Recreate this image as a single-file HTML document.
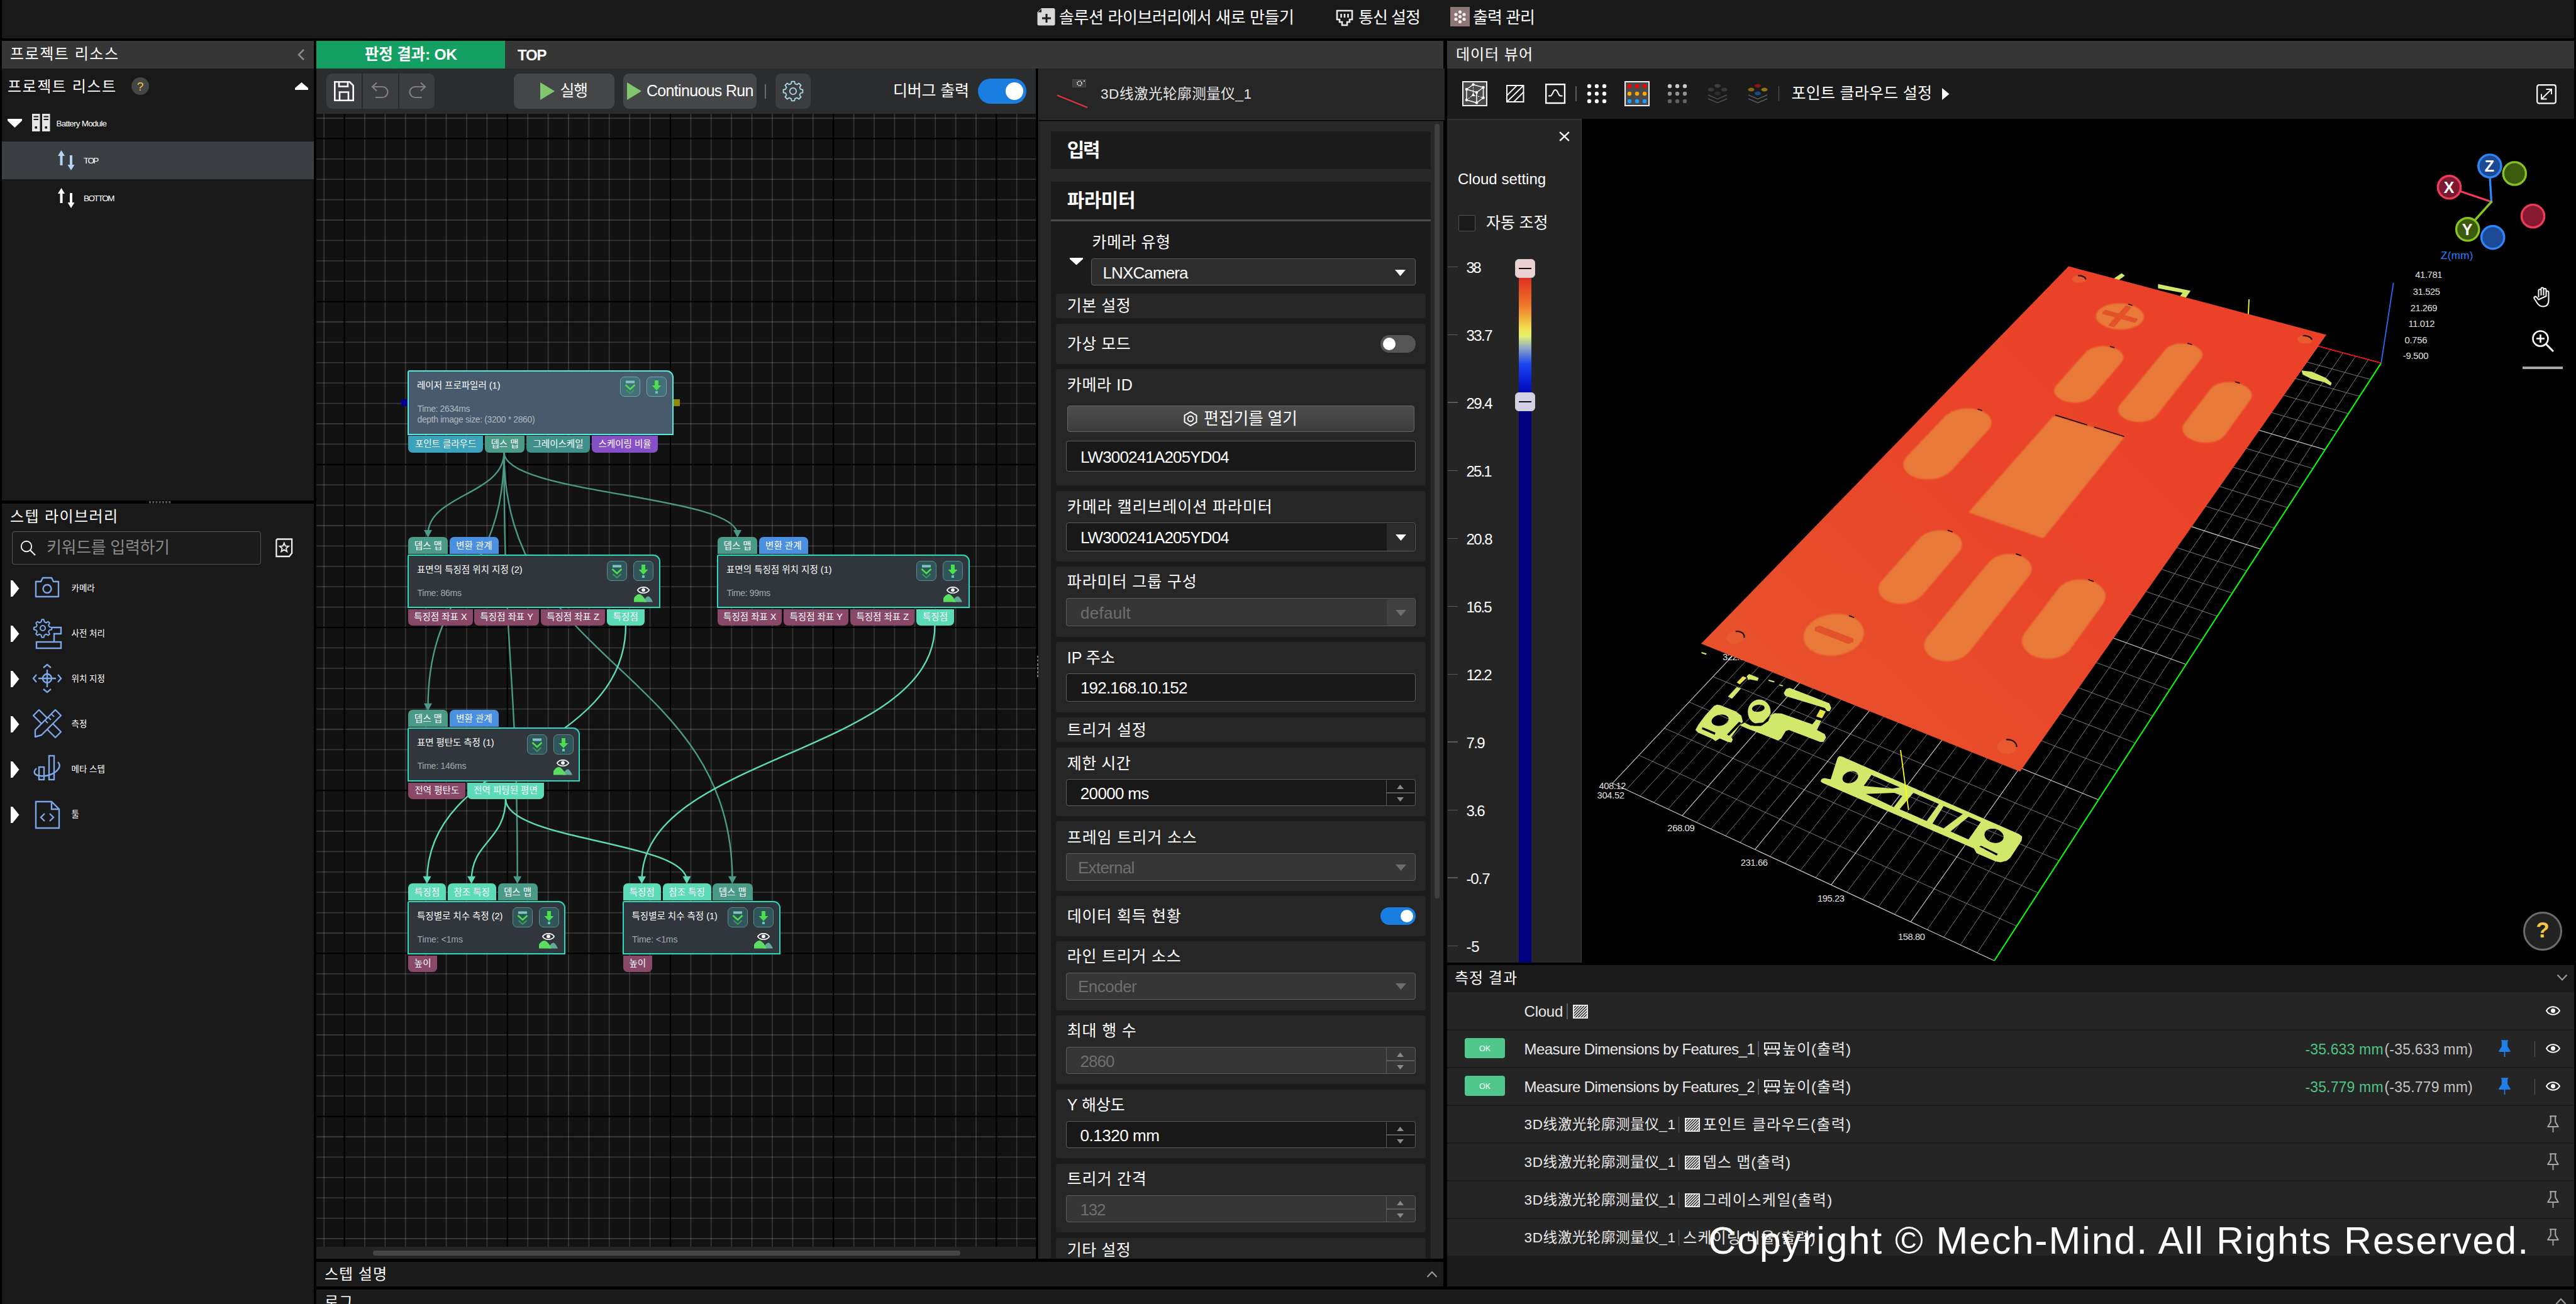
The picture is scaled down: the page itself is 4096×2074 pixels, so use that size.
<!DOCTYPE html>
<html lang="ko"><head><meta charset="utf-8"><title>Mech-MSR</title><style>
*{box-sizing:border-box;margin:0;padding:0}
html,body{width:4096px;height:2074px;overflow:hidden;background:#000}
body{position:relative;font-family:"Liberation Sans","Noto Sans CJK KR","Noto Sans CJK SC",sans-serif;color:#fff}
div{position:absolute}
.t{white-space:nowrap}
svg{overflow:visible}
</style></head><body>
<!-- p1_frame -->
<div style="left:3.0px;top:0.0px;width:4090.0px;height:60.6px;background:#191919;border-radius:0 0 3px 3px;"></div>
<svg style="position:absolute;left:1649.0px;top:12.0px;" width="29.0" height="30.0" viewBox="0 0 29 30"><path d="M8 1 H26 a2.5 2.5 0 0 1 2.5 2.5 V26 a2.5 2.5 0 0 1 -2.5 2.5 H3 a2.5 2.5 0 0 1 -2.5 -2.5 V8.5 Z" fill="#d8d8d8"/><path d="M0.5 8 L7.5 1 V8 Z" fill="#191919" stroke="#d8d8d8" stroke-width="1"/><path d="M15 10 V24 M8 17 H22" stroke="#191919" stroke-width="3" fill="none"/></svg>
<div class="t" style="left:1684.0px;top:9.5px;line-height:36px;font-size:26px;color:#fff;letter-spacing:-0.38px;">솔루션 라이브러리에서 새로 만들기</div>
<svg style="position:absolute;left:2124.0px;top:15.0px;" width="28.0" height="28.0" viewBox="0 0 28 28"><path d="M2 2 H26 V16 H22 V20 H18 V25 H10 V20 H6 V16 H2 Z" fill="none" stroke="#e8e8e8" stroke-width="2.6" stroke-linejoin="miter"/><path d="M8.5 7 V13 M14 7 V13 M19.5 7 V13" stroke="#e8e8e8" stroke-width="2.6"/></svg>
<div class="t" style="left:2160.0px;top:9.5px;line-height:36px;font-size:26px;color:#fff;letter-spacing:-0.98px;">통신 설정</div>
<svg style="position:absolute;left:2306.0px;top:11.0px;" width="31.0" height="31.0" viewBox="0 0 31 31"><rect x="0" y="0" width="31" height="31" fill="#8d7777"/><circle cx="15.5" cy="8" r="2.6" fill="#f4eeee"/><circle cx="9" cy="12" r="2.6" fill="#f4eeee"/><circle cx="22" cy="12" r="2.6" fill="#f4eeee"/><circle cx="15.5" cy="15.5" r="2.6" fill="#f4eeee"/><circle cx="9" cy="19.5" r="2.6" fill="#f4eeee"/><circle cx="22" cy="19.5" r="2.6" fill="#f4eeee"/><circle cx="15.5" cy="23.5" r="2.6" fill="#f4eeee"/></svg>
<div class="t" style="left:2342.0px;top:9.5px;line-height:36px;font-size:26px;color:#fff;letter-spacing:-0.98px;">출력 관리</div>
<div style="left:3.0px;top:65.0px;width:496.0px;height:44.0px;background:#363636;"></div>
<div class="t" style="left:16.0px;top:69.0px;line-height:34px;font-size:24px;color:#fff;letter-spacing:1.54px;">프로젝트 리소스</div>
<svg style="position:absolute;left:472.0px;top:77.0px;" width="14.0" height="20.0" viewBox="0 0 14 20"><path d="M11 2 L3 10 L11 18" fill="none" stroke="#8a8a8a" stroke-width="2.6"/></svg>
<div style="left:3.0px;top:109.0px;width:496.0px;height:687.0px;background:#191919;"></div>
<div class="t" style="left:12.0px;top:120.5px;line-height:34px;font-size:24px;color:#fff;letter-spacing:1.54px;">프로젝트 리스트</div>
<div style="left:209.0px;top:123.0px;width:28.0px;height:28.0px;background:#454545;border-radius:50%;"></div>
<div class="t" style="left:-177.0px;width:800px;text-align:center;top:124.0px;line-height:27px;font-size:19px;color:#f2c744;">?</div>
<svg style="position:absolute;left:469.0px;top:131.0px;" width="21.0" height="12.0" viewBox="0 0 21 12"><path d="M10.5 0 L21 9 V12 H0 V9 Z" fill="#fff"/></svg>
<svg style="position:absolute;left:12.0px;top:189.0px;" width="23.0" height="14.0" viewBox="0 0 23 14"><path d="M0 0 H23 V3 L11.5 14 L0 3 Z" fill="#fff"/></svg>
<svg style="position:absolute;left:50.5px;top:181.0px;" width="28.5" height="28.0" viewBox="0 0 28.5 28"><g fill="#e6e6e6"><rect x="0" y="0" width="12.5" height="28"/><rect x="16" y="0" width="12.5" height="28"/></g><g fill="#191919"><rect x="2.5" y="3.5" width="7.5" height="2"/><rect x="2.5" y="8" width="7.5" height="2"/><rect x="4.5" y="20" width="3.5" height="3.5"/><rect x="18.5" y="3.5" width="7.5" height="2"/><rect x="18.5" y="8" width="7.5" height="2"/><rect x="20.5" y="20" width="3.5" height="3.5"/></g></svg>
<div class="t" style="left:89.5px;top:186.5px;line-height:19px;font-size:13.5px;color:#fff;letter-spacing:-0.79px;">Battery Module</div>
<div style="left:3.0px;top:225.0px;width:496.0px;height:60.0px;background:#3a3d42;"></div>
<svg style="position:absolute;left:92.0px;top:239.0px;" width="27.0" height="32.0" viewBox="0 0 27 32"><g fill="#b7d3f2"><path d="M5.5 0 L11 9 H7.5 V24 H3.5 V9 H0 Z"/><path d="M21 32 L15.5 23 H19 V8 H23 V23 H26.5 Z"/></g></svg>
<div class="t" style="left:133.0px;top:246.0px;line-height:19px;font-size:13.5px;color:#fff;letter-spacing:-1.62px;">TOP</div>
<svg style="position:absolute;left:92.0px;top:299.0px;" width="27.0" height="32.0" viewBox="0 0 27 32"><g fill="#ffffff"><path d="M5.5 0 L11 9 H7.5 V24 H3.5 V9 H0 Z"/><path d="M21 32 L15.5 23 H19 V8 H23 V23 H26.5 Z"/></g></svg>
<div class="t" style="left:133.0px;top:306.0px;line-height:19px;font-size:13.5px;color:#fff;letter-spacing:-1.62px;">BOTTOM</div>
<svg style="position:absolute;left:237.0px;top:797.0px;" width="36.0" height="4.0" viewBox="0 0 36 4"><rect x="0.0" y="0" width="3" height="3.5" fill="#555"/><rect x="5.2" y="0" width="3" height="3.5" fill="#555"/><rect x="10.4" y="0" width="3" height="3.5" fill="#555"/><rect x="15.6" y="0" width="3" height="3.5" fill="#555"/><rect x="20.8" y="0" width="3" height="3.5" fill="#555"/><rect x="26.0" y="0" width="3" height="3.5" fill="#555"/><rect x="31.2" y="0" width="3" height="3.5" fill="#555"/></svg>
<div style="left:3.0px;top:801.0px;width:496.0px;height:1273.0px;background:#191919;"></div>
<div class="t" style="left:16.0px;top:805.0px;line-height:34px;font-size:24px;color:#fff;letter-spacing:1.40px;">스텝 라이브러리</div>
<div style="left:19.0px;top:845.0px;width:396.0px;height:53.0px;background:#1b1b1b;border:1.5px solid #555;border-radius:4px;"></div>
<svg style="position:absolute;left:32.0px;top:859.0px;" width="26.0" height="26.0" viewBox="0 0 26 26"><circle cx="10" cy="10" r="8.2" fill="none" stroke="#f4f4f4" stroke-width="1.9"/><path d="M16 16 L24 24" stroke="#f4f4f4" stroke-width="2.2"/></svg>
<div class="t" style="left:74.0px;top:853.0px;line-height:36px;font-size:26px;color:#8a8a8a;letter-spacing:-0.32px;">키워드를 입력하기</div>
<svg style="position:absolute;left:437.5px;top:856.0px;" width="27.5" height="30.5" viewBox="0 0 29 32"><path d="M3 1.5 H27.5 V25 L23 30.5 H1.5 V3 Z" fill="none" stroke="#f0f0f0" stroke-width="2.4"/><path d="M14.5 8 L16.6 13 L22 13.4 L17.9 16.9 L19.2 22.2 L14.5 19.3 L9.8 22.2 L11.1 16.9 L7 13.4 L12.4 13 Z" fill="none" stroke="#f0f0f0" stroke-width="2"/></svg>
<svg style="position:absolute;left:16.8px;top:923.0px;" width="13.5" height="26.0" viewBox="0 0 13.5 26"><path d="M0 0 H3 L13.5 13 L3 26 H0 Z" fill="#fff"/></svg>
<svg style="position:absolute;left:54.8px;top:913.0px;" width="46.0" height="46.0" viewBox="0 0 46 46"><path d="M2 12 H10 L13 6 H27 L30 12 H38 V36 H2 Z" fill="none" stroke="#7da7e6" stroke-width="2.4" stroke-linejoin="round"/><circle cx="20" cy="23.5" r="6.5" fill="none" stroke="#7da7e6" stroke-width="2.4"/></svg>
<div class="t" style="left:113.5px;top:925.5px;line-height:19px;font-size:13.5px;color:#fff;">카메라</div>
<svg style="position:absolute;left:16.8px;top:995.0px;" width="13.5" height="26.0" viewBox="0 0 13.5 26"><path d="M0 0 H3 L13.5 13 L3 26 H0 Z" fill="#fff"/></svg>
<svg style="position:absolute;left:52.0px;top:984.0px;" width="46.0" height="46.0" viewBox="0 0 46 46"><circle cx="16" cy="15" r="4" fill="none" stroke="#7da7e6" stroke-width="2.2"/><path d="M16 1.5 l3 0 l1 4 l3 1.5 l3.5 -2 l2.5 2.5 l-2 3.5 l1.5 3 l4 1 l0 3.5 l-4 1 l-1.5 3 l2 3.5 l-2.5 2.5 l-3.5 -2 l-3 1.5 l-1 4 l-3.5 0 l-1 -4 l-3 -1.5 l-3.500 2 l-2.5 -2.5 l2 -3.5 l-1.5 -3 l-4 -1 l0 -3.5 l4 -1 l1.5 -3 l-2 -3.5 l2.5 -2.5 l3.5 2 l3 -1.5 l1 -4 z" fill="none" stroke="#7da7e6" stroke-width="2.2" stroke-linejoin="round" transform="translate(0,0) scale(0.93)"/><path d="M31 14 H45 V24 H34 V36" fill="none" stroke="#7da7e6" stroke-width="2.4"/><rect x="6" y="37" width="39" height="10" fill="none" stroke="#7da7e6" stroke-width="2.4"/></svg>
<div class="t" style="left:113.5px;top:997.5px;line-height:19px;font-size:13.5px;color:#fff;">사전 처리</div>
<svg style="position:absolute;left:16.8px;top:1067.0px;" width="13.5" height="26.0" viewBox="0 0 13.5 26"><path d="M0 0 H3 L13.5 13 L3 26 H0 Z" fill="#fff"/></svg>
<svg style="position:absolute;left:52.0px;top:1056.0px;" width="46.0" height="46.0" viewBox="0 0 46 46"><circle cx="23" cy="23" r="7" fill="none" stroke="#7da7e6" stroke-width="2.4"/><path d="M23 9 V37 M9 23 H37" stroke="#7da7e6" stroke-width="2.4"/><path d="M17 6 L23 1 L29 6 M17 40 L23 45 L29 40 M6 17 L1 23 L6 29 M40 17 L45 23 L40 29" fill="none" stroke="#7da7e6" stroke-width="2.4"/></svg>
<div class="t" style="left:113.5px;top:1069.5px;line-height:19px;font-size:13.5px;color:#fff;">위치 지정</div>
<svg style="position:absolute;left:16.8px;top:1139.0px;" width="13.5" height="26.0" viewBox="0 0 13.5 26"><path d="M0 0 H3 L13.5 13 L3 26 H0 Z" fill="#fff"/></svg>
<svg style="position:absolute;left:52.0px;top:1128.0px;" width="46.0" height="46.0" viewBox="0 0 46 46"><path d="M10 1 L45 36 L36 45 L1 10 Z" fill="none" stroke="#7da7e6" stroke-width="2.4" stroke-linejoin="round"/><path d="M36 1 L45 10 L14 41 L4 44 L4 33 Z" fill="#191919" stroke="#7da7e6" stroke-width="2.4" stroke-linejoin="round"/><path d="M30 8 L34 12 M25 13 L29 17 M20 18 L24 22" stroke="#7da7e6" stroke-width="2"/></svg>
<div class="t" style="left:113.5px;top:1141.5px;line-height:19px;font-size:13.5px;color:#fff;">측정</div>
<svg style="position:absolute;left:16.8px;top:1211.0px;" width="13.5" height="26.0" viewBox="0 0 13.5 26"><path d="M0 0 H3 L13.5 13 L3 26 H0 Z" fill="#fff"/></svg>
<svg style="position:absolute;left:52.0px;top:1200.0px;" width="46.0" height="46.0" viewBox="0 0 46 46"><rect x="10" y="20" width="8" height="20" fill="none" stroke="#7da7e6" stroke-width="2.4"/><rect x="26" y="2" width="8" height="38" fill="none" stroke="#7da7e6" stroke-width="2.4"/><path d="M40 12 C50 22 30 36 12 34 C2 33 0 28 6 22" fill="none" stroke="#7da7e6" stroke-width="2.4"/></svg>
<div class="t" style="left:113.5px;top:1213.5px;line-height:19px;font-size:13.5px;color:#fff;">메타 스텝</div>
<svg style="position:absolute;left:16.8px;top:1283.0px;" width="13.5" height="26.0" viewBox="0 0 13.5 26"><path d="M0 0 H3 L13.5 13 L3 26 H0 Z" fill="#fff"/></svg>
<svg style="position:absolute;left:54.8px;top:1273.0px;" width="46.0" height="46.0" viewBox="0 0 46 46"><path d="M2 2 H27 L39 14 V44 H2 Z" fill="none" stroke="#7da7e6" stroke-width="2.4"/><path d="M27 2 V14 H39" fill="none" stroke="#7da7e6" stroke-width="2.4"/><path d="M16 21 L10 27 L16 33 M24 21 L30 27 L24 33" fill="none" stroke="#7da7e6" stroke-width="2.4"/></svg>
<div class="t" style="left:113.5px;top:1285.5px;line-height:19px;font-size:13.5px;color:#fff;">툴</div>
<!-- p2_center -->
<div style="left:503.0px;top:65.0px;width:1792.0px;height:44.0px;background:#363636;"></div>
<div style="left:503.0px;top:65.0px;width:300.0px;height:44.0px;background:#13a062;"></div>
<div class="t" style="left:580.0px;top:70.0px;line-height:34px;font-size:24.5px;color:#fff;font-weight:700;letter-spacing:-0.21px;">판정 결과: OK</div>
<div class="t" style="left:823.0px;top:70.5px;line-height:34px;font-size:24px;color:#fff;font-weight:700;letter-spacing:-1.20px;">TOP</div>
<div style="left:503.0px;top:109.0px;width:1144.0px;height:72.0px;background:#2b2c2e;"></div>
<div style="left:519.0px;top:117.0px;width:172.0px;height:56.0px;background:#3c3d40;border-radius:9px;"></div>
<div style="left:575.0px;top:117.0px;width:1.5px;height:56.0px;background:#2b2c2e;"></div>
<div style="left:633.0px;top:117.0px;width:1.5px;height:56.0px;background:#2b2c2e;"></div>
<svg style="position:absolute;left:531.0px;top:129.0px;" width="32.0" height="32.0" viewBox="0 0 32 32"><path d="M1.3 1.3 H25 L30.7 7 V30.7 H1.3 Z" fill="none" stroke="#fff" stroke-width="2.6"/><path d="M8 1.3 V8.5 H22 V1.3" fill="none" stroke="#fff" stroke-width="2.6"/><path d="M9 30.7 V17.5 H23 V30.7" fill="none" stroke="#fff" stroke-width="2.6"/></svg>
<svg style="position:absolute;left:590.0px;top:130.0px;" width="30.0" height="28.0" viewBox="0 0 30 28"><path d="M9 1.5 L2 8 L9 14.5 M2 8 H18 a8.5 8.5 0 0 1 0 17 H7" fill="none" stroke="#808080" stroke-width="2.2"/></svg>
<svg style="position:absolute;left:648.0px;top:130.0px;" width="30.0" height="28.0" viewBox="0 0 30 28"><path d="M21 1.5 L28 8 L21 14.5 M28 8 H12 a8.5 8.5 0 0 0 0 17 H23" fill="none" stroke="#808080" stroke-width="2.2"/></svg>
<div style="left:817.0px;top:117.0px;width:160.0px;height:56.0px;background:#454648;border-radius:9px;"></div>
<svg style="position:absolute;left:859.0px;top:131.0px;" width="23.0" height="28.0" viewBox="0 0 23 28"><path d="M0 0 L23 14 L0 28 Z" fill="#7fc66e"/></svg>
<div class="t" style="left:890.5px;top:127.0px;line-height:35px;font-size:25px;color:#fff;letter-spacing:-1.52px;">실행</div>
<div style="left:991.0px;top:117.0px;width:212.0px;height:56.0px;background:#454648;border-radius:9px;"></div>
<svg style="position:absolute;left:997.0px;top:131.0px;" width="23.0" height="28.0" viewBox="0 0 23 28"><path d="M0 0 L23 14 L0 28 Z" fill="#7fc66e"/></svg>
<div class="t" style="left:1028.0px;top:127.0px;line-height:35px;font-size:25px;color:#fff;letter-spacing:-0.68px;">Continuous Run</div>
<div style="left:1216.0px;top:134.0px;width:1.6px;height:23.0px;background:#6a6a6a;"></div>
<div style="left:1233.0px;top:117.0px;width:56.0px;height:56.0px;background:#3c3d40;border-radius:9px;"></div>
<svg style="position:absolute;left:1245.0px;top:129.0px;" width="32.0" height="32.0" viewBox="0 0 32 32"><path d="M12.98 4.18 L13.67 0.58 L18.33 0.58 L19.02 4.18 L22.22 5.51 L25.26 3.44 L28.56 6.74 L26.49 9.78 L27.82 12.98 L31.42 13.67 L31.42 18.33 L27.82 19.02 L26.49 22.22 L28.56 25.26 L25.26 28.56 L22.22 26.49 L19.02 27.82 L18.33 31.42 L13.67 31.42 L12.98 27.82 L9.78 26.49 L6.74 28.56 L3.44 25.26 L5.51 22.22 L4.18 19.02 L0.58 18.33 L0.58 13.67 L4.18 12.98 L5.51 9.78 L3.44 6.74 L6.74 3.44 L9.78 5.51 Z" fill="none" stroke="#a9dcea" stroke-width="1.8" stroke-linejoin="round"/><circle cx="16" cy="16" r="5.2" fill="none" stroke="#a9dcea" stroke-width="1.8"/></svg>
<div class="t" style="left:1420.0px;top:127.0px;line-height:35px;font-size:25px;color:#fff;letter-spacing:-0.19px;">디버그 출력</div>
<div style="left:1554.5px;top:125.0px;width:77.0px;height:40.0px;background:#1a7ee0;border-radius:20px;"></div>
<div style="left:1598.5px;top:130.5px;width:28.5px;height:28.5px;background:#fff;border-radius:50%;"></div>
<div style="left:503.0px;top:181.0px;width:1144.0px;height:1802.0px;background:#121212;overflow:hidden;"><svg style="position:absolute;left:0.0px;top:0.0px;" width="1144.0" height="1802.0" viewBox="0 0 1144 1802"><path d="M12.2 0V1802M77.0 0V1802M109.4 0V1802M141.8 0V1802M174.2 0V1802M206.6 0V1802M239.0 0V1802M271.4 0V1802M336.2 0V1802M368.6 0V1802M401.0 0V1802M433.4 0V1802M465.8 0V1802M498.2 0V1802M530.6 0V1802M595.4 0V1802M627.8 0V1802M660.2 0V1802M692.6 0V1802M725.0 0V1802M757.4 0V1802M789.8 0V1802M854.6 0V1802M887.0 0V1802M919.4 0V1802M951.8 0V1802M984.2 0V1802M1016.6 0V1802M1049.0 0V1802M1113.8 0V1802" stroke="rgba(255,255,255,0.15)" stroke-width="1.8" fill="none"/><path d="M0 7.0H1144M0 71.8H1144M0 104.2H1144M0 136.6H1144M0 169.0H1144M0 201.4H1144M0 233.8H1144M0 266.2H1144M0 331.0H1144M0 363.4H1144M0 395.8H1144M0 428.2H1144M0 460.6H1144M0 493.0H1144M0 525.4H1144M0 590.2H1144M0 622.6H1144M0 655.0H1144M0 687.4H1144M0 719.8H1144M0 752.2H1144M0 784.6H1144M0 849.4H1144M0 881.8H1144M0 914.2H1144M0 946.6H1144M0 979.0H1144M0 1011.4H1144M0 1043.8H1144M0 1108.6H1144M0 1141.0H1144M0 1173.4H1144M0 1205.8H1144M0 1238.2H1144M0 1270.6H1144M0 1303.0H1144M0 1367.8H1144M0 1400.2H1144M0 1432.6H1144M0 1465.0H1144M0 1497.4H1144M0 1529.8H1144M0 1562.2H1144M0 1627.0H1144M0 1659.4H1144M0 1691.8H1144M0 1724.2H1144M0 1756.6H1144M0 1789.0H1144" stroke="rgba(255,255,255,0.15)" stroke-width="1.8" fill="none"/><path d="M44.6 0V1802M303.8 0V1802M563.0 0V1802M822.2 0V1802M1081.4 0V1802M0 39.4H1144M0 298.6H1144M0 557.8H1144M0 817.0H1144M0 1076.2H1144M0 1335.4H1144M0 1594.6H1144" stroke="#000" stroke-width="2.2" fill="none"/></svg></div>
<div style="left:503.0px;top:1983.0px;width:1144.0px;height:19.0px;background:#232323;"></div>
<div style="left:593.0px;top:1988.5px;width:934.0px;height:8.0px;background:#454545;border-radius:4px;"></div>
<svg style="position:absolute;left:0.0px;top:0.0px;" width="4096.0" height="2074.0" viewBox="0 0 4096 2074"><path d="M801.5 719.6 C801.5 786.8 680.5 786.8 680.5 850.0" fill="none" stroke="#4a9a88" stroke-width="2.4"/><path d="M674.0 843.0 H687.0 L680.5 855.0 Z" fill="#4a9a88"/><path d="M801.5 719.6 C801.5 786.8 1172.5 786.8 1172.5 850.0" fill="none" stroke="#4a9a88" stroke-width="2.4"/><path d="M1166.0 843.0 H1179.0 L1172.5 855.0 Z" fill="#4a9a88"/><path d="M801.5 719.6 C801.5 924.7 680.5 924.7 680.5 1125.7" fill="none" stroke="#4a9a88" stroke-width="2.4"/><path d="M674.0 1118.7 H687.0 L680.5 1130.7 Z" fill="#4a9a88"/><path d="M801.5 719.6 C801.5 1062.2 822.7 1062.2 822.7 1400.8" fill="none" stroke="#4a9a88" stroke-width="2.4"/><path d="M816.2 1393.8 H829.2 L822.7 1405.8 Z" fill="#4a9a88"/><path d="M801.5 719.6 C801.5 1062.2 1164.5 1062.2 1164.5 1400.8" fill="none" stroke="#4a9a88" stroke-width="2.4"/><path d="M1158.0 1393.8 H1171.0 L1164.5 1405.8 Z" fill="#4a9a88"/><path d="M995.0 994.5 C995.0 1199.7 679.0 1199.7 679.0 1400.8" fill="none" stroke="#5cdcb6" stroke-width="2.4"/><path d="M672.5 1393.8 H685.5 L679.0 1405.8 Z" fill="#5cdcb6"/><path d="M1486.5 994.5 C1486.5 1199.7 1020.5 1199.7 1020.5 1400.8" fill="none" stroke="#5cdcb6" stroke-width="2.4"/><path d="M1014.0 1393.8 H1027.0 L1020.5 1405.8 Z" fill="#5cdcb6"/><path d="M804.0 1270.5 C804.0 1337.7 749.6 1337.7 749.6 1400.8" fill="none" stroke="#5cdcb6" stroke-width="2.4"/><path d="M743.1 1393.8 H756.1 L749.6 1405.8 Z" fill="#5cdcb6"/><path d="M804.0 1270.5 C804.0 1337.7 1092.0 1337.7 1092.0 1400.8" fill="none" stroke="#5cdcb6" stroke-width="2.4"/><path d="M1085.5 1393.8 H1098.5 L1092.0 1405.8 Z" fill="#5cdcb6"/></svg>
<div style="left:637.5px;top:634.8px;width:11.0px;height:11.0px;background:#00008b;"></div>
<div style="left:1070.5px;top:634.8px;width:10.5px;height:11.0px;background:#8f8a00;"></div>
<div style="left:648.0px;top:589.0px;width:423.0px;height:103.0px;background:#485a6e;border:2.7px solid #52f0dc;border-radius:3px 11px 0 0;"></div><div class="t" style="left:663.0px;top:602.5px;line-height:20px;font-size:14.5px;color:#fff;">레이저 프로파일러 (1)</div><div class="t" style="left:663.5px;top:640.0px;line-height:20px;font-size:14px;color:#b0b8c0;letter-spacing:-0.38px;">Time: 2634ms</div><div class="t" style="left:663.5px;top:657.3px;line-height:20px;font-size:14px;color:#b0b8c0;letter-spacing:-0.38px;">depth image size: (3200 * 2860)</div>
<div style="left:986.0px;top:599.3px;width:32.0px;height:32.0px;background:#43707a;border:1.3px solid #74a4a4;border-radius:7px;"></div><svg style="position:absolute;left:986.0px;top:599.3px;" width="32.0" height="32.0" viewBox="0 0 32 32"><rect x="9" y="6.5" width="14" height="4" fill="#7cc8c0"/><path d="M8.5 13 L16 20 L23.5 13" fill="none" stroke="#4be04b" stroke-width="2.6"/><path d="M9.5 21 L16 27 L22.5 21" fill="none" stroke="#3f9a58" stroke-width="2"/></svg>
<div style="left:1027.8px;top:599.3px;width:32.0px;height:32.0px;background:#43707a;border:1.3px solid #74a4a4;border-radius:7px;"></div><svg style="position:absolute;left:1027.8px;top:599.3px;" width="32.0" height="32.0" viewBox="0 0 32 32"><path d="M13 6 H19 V14 H23.5 L16 22 L8.5 14 H13 Z" fill="#4be04b"/><rect x="14" y="23" width="4" height="4" fill="#5cc8b0"/></svg>
<div style="left:649.2px;top:693.0px;width:118.8px;height:26.6px;background:#3aa2ba;border-radius:0 0 7px 7px;"></div><div class="t" style="left:308.6px;width:800px;text-align:center;top:695.8px;line-height:20px;font-size:14.5px;color:#fff;">포인트 클라우드</div>
<div style="left:771.0px;top:693.0px;width:63.0px;height:26.6px;background:#4a9a88;border-radius:0 0 7px 7px;"></div><div class="t" style="left:402.5px;width:800px;text-align:center;top:695.8px;line-height:20px;font-size:14.5px;color:#fff;">뎁스 맵</div>
<div style="left:836.7px;top:693.0px;width:101.6px;height:26.6px;background:#3f908a;border-radius:0 0 7px 7px;"></div><div class="t" style="left:487.5px;width:800px;text-align:center;top:695.8px;line-height:20px;font-size:14.5px;color:#fff;">그레이스케일</div>
<div style="left:941.0px;top:693.0px;width:105.3px;height:26.6px;background:#8850c8;border-radius:0 0 7px 7px;"></div><div class="t" style="left:593.6px;width:800px;text-align:center;top:695.8px;line-height:20px;font-size:14.5px;color:#fff;">스케이링 비율</div>
<div style="left:649.2px;top:854.0px;width:63.3px;height:27.0px;background:#4a9a88;border-radius:7px 7px 0 0;"></div><div class="t" style="left:280.9px;width:800px;text-align:center;top:858.0px;line-height:20px;font-size:14.5px;color:#fff;">뎁스 맵</div>
<div style="left:715.0px;top:854.0px;width:77.7px;height:27.0px;background:#4a8fe0;border-radius:7px 7px 0 0;"></div><div class="t" style="left:353.9px;width:800px;text-align:center;top:858.0px;line-height:20px;font-size:14.5px;color:#fff;">변환 관계</div>
<div style="left:648.0px;top:882.2px;width:401.5px;height:84.6px;background:#30363c;border:2.7px solid #27dcc0;border-radius:3px 11px 0 0;"></div><div class="t" style="left:663.0px;top:895.7px;line-height:20px;font-size:14.5px;color:#fff;letter-spacing:0.02px;">표면의 특징점 위치 지정 (2)</div><div class="t" style="left:663.5px;top:933.2px;line-height:20px;font-size:14px;color:#a4aab0;letter-spacing:-0.23px;">Time: 86ms</div>
<div style="left:965.0px;top:892.2px;width:32.0px;height:32.0px;background:#30555a;border:1.3px solid #5c8c8a;border-radius:7px;"></div><svg style="position:absolute;left:965.0px;top:892.2px;" width="32.0" height="32.0" viewBox="0 0 32 32"><rect x="9" y="6.5" width="14" height="4" fill="#7cc8c0"/><path d="M8.5 13 L16 20 L23.5 13" fill="none" stroke="#4be04b" stroke-width="2.6"/><path d="M9.5 21 L16 27 L22.5 21" fill="none" stroke="#3f9a58" stroke-width="2"/></svg>
<div style="left:1006.8px;top:892.2px;width:32.0px;height:32.0px;background:#30555a;border:1.3px solid #5c8c8a;border-radius:7px;"></div><svg style="position:absolute;left:1006.8px;top:892.2px;" width="32.0" height="32.0" viewBox="0 0 32 32"><path d="M13 6 H19 V14 H23.5 L16 22 L8.5 14 H13 Z" fill="#4be04b"/><rect x="14" y="23" width="4" height="4" fill="#5cc8b0"/></svg>
<svg style="position:absolute;left:1007.8px;top:930.5px;" width="32.0" height="28.0" viewBox="0 0 32 28"><path d="M5.8 7.5 C9.5 1.2 20.5 1.2 24.2 7.5 C20.5 13.8 9.5 13.8 5.8 7.5 Z" fill="none" stroke="#fff" stroke-width="1.7"/><circle cx="15" cy="7.3" r="2.9" fill="#fff"/><path d="M15 26.5 C17.5 20 21 16.2 24 17.8 C26.5 19.5 28.5 23 30 26.5 Z" fill="#62aa98"/><path d="M0 26.5 V20.5 C3 15.5 8 12.5 11.5 15 C15 17.5 18 22 20 26.5 Z" fill="#5bdc62"/></svg>
<div style="left:649.2px;top:968.5px;width:102.4px;height:26.0px;background:#8a4868;border-radius:0 0 7px 7px;"></div><div class="t" style="left:300.4px;width:800px;text-align:center;top:971.0px;line-height:20px;font-size:14.5px;color:#fff;">특징점 좌표 X</div>
<div style="left:754.4px;top:968.5px;width:102.6px;height:26.0px;background:#8a4868;border-radius:0 0 7px 7px;"></div><div class="t" style="left:405.7px;width:800px;text-align:center;top:971.0px;line-height:20px;font-size:14.5px;color:#fff;">특징점 좌표 Y</div>
<div style="left:860.0px;top:968.5px;width:102.0px;height:26.0px;background:#8a4868;border-radius:0 0 7px 7px;"></div><div class="t" style="left:511.0px;width:800px;text-align:center;top:971.0px;line-height:20px;font-size:14.5px;color:#fff;">특징점 좌표 Z</div>
<div style="left:965.0px;top:968.5px;width:59.5px;height:26.0px;background:#5cdcb6;border-radius:0 0 7px 7px;"></div><div class="t" style="left:594.8px;width:800px;text-align:center;top:971.0px;line-height:20px;font-size:14.5px;color:#fff;">특징점</div>
<div style="left:1141.2px;top:854.0px;width:62.8px;height:27.0px;background:#4a9a88;border-radius:7px 7px 0 0;"></div><div class="t" style="left:772.6px;width:800px;text-align:center;top:858.0px;line-height:20px;font-size:14.5px;color:#fff;">뎁스 맵</div>
<div style="left:1207.0px;top:854.0px;width:77.5px;height:27.0px;background:#4a8fe0;border-radius:7px 7px 0 0;"></div><div class="t" style="left:845.8px;width:800px;text-align:center;top:858.0px;line-height:20px;font-size:14.5px;color:#fff;">변환 관계</div>
<div style="left:1140.0px;top:882.2px;width:401.5px;height:84.6px;background:#30363c;border:2.7px solid #27dcc0;border-radius:3px 11px 0 0;"></div><div class="t" style="left:1155.0px;top:895.7px;line-height:20px;font-size:14.5px;color:#fff;letter-spacing:0.02px;">표면의 특징점 위치 지정 (1)</div><div class="t" style="left:1155.5px;top:933.2px;line-height:20px;font-size:14px;color:#a4aab0;letter-spacing:-0.35px;">Time: 99ms</div>
<div style="left:1457.0px;top:892.2px;width:32.0px;height:32.0px;background:#30555a;border:1.3px solid #5c8c8a;border-radius:7px;"></div><svg style="position:absolute;left:1457.0px;top:892.2px;" width="32.0" height="32.0" viewBox="0 0 32 32"><rect x="9" y="6.5" width="14" height="4" fill="#7cc8c0"/><path d="M8.5 13 L16 20 L23.5 13" fill="none" stroke="#4be04b" stroke-width="2.6"/><path d="M9.5 21 L16 27 L22.5 21" fill="none" stroke="#3f9a58" stroke-width="2"/></svg>
<div style="left:1498.8px;top:892.2px;width:32.0px;height:32.0px;background:#30555a;border:1.3px solid #5c8c8a;border-radius:7px;"></div><svg style="position:absolute;left:1498.8px;top:892.2px;" width="32.0" height="32.0" viewBox="0 0 32 32"><path d="M13 6 H19 V14 H23.5 L16 22 L8.5 14 H13 Z" fill="#4be04b"/><rect x="14" y="23" width="4" height="4" fill="#5cc8b0"/></svg>
<svg style="position:absolute;left:1499.5px;top:930.5px;" width="32.0" height="28.0" viewBox="0 0 32 28"><path d="M5.8 7.5 C9.5 1.2 20.5 1.2 24.2 7.5 C20.5 13.8 9.5 13.8 5.8 7.5 Z" fill="none" stroke="#fff" stroke-width="1.7"/><circle cx="15" cy="7.3" r="2.9" fill="#fff"/><path d="M15 26.5 C17.5 20 21 16.2 24 17.8 C26.5 19.5 28.5 23 30 26.5 Z" fill="#62aa98"/><path d="M0 26.5 V20.5 C3 15.5 8 12.5 11.5 15 C15 17.5 18 22 20 26.5 Z" fill="#5bdc62"/></svg>
<div style="left:1141.2px;top:968.5px;width:102.3px;height:26.0px;background:#8a4868;border-radius:0 0 7px 7px;"></div><div class="t" style="left:792.3px;width:800px;text-align:center;top:971.0px;line-height:20px;font-size:14.5px;color:#fff;">특징점 좌표 X</div>
<div style="left:1246.4px;top:968.5px;width:102.6px;height:26.0px;background:#8a4868;border-radius:0 0 7px 7px;"></div><div class="t" style="left:897.7px;width:800px;text-align:center;top:971.0px;line-height:20px;font-size:14.5px;color:#fff;">특징점 좌표 Y</div>
<div style="left:1352.0px;top:968.5px;width:102.4px;height:26.0px;background:#8a4868;border-radius:0 0 7px 7px;"></div><div class="t" style="left:1003.2px;width:800px;text-align:center;top:971.0px;line-height:20px;font-size:14.5px;color:#fff;">특징점 좌표 Z</div>
<div style="left:1457.0px;top:968.5px;width:60.0px;height:26.0px;background:#5cdcb6;border-radius:0 0 7px 7px;"></div><div class="t" style="left:1087.0px;width:800px;text-align:center;top:971.0px;line-height:20px;font-size:14.5px;color:#fff;">특징점</div>
<div style="left:649.2px;top:1129.0px;width:63.3px;height:27.2px;background:#4a9a88;border-radius:7px 7px 0 0;"></div><div class="t" style="left:280.9px;width:800px;text-align:center;top:1133.1px;line-height:20px;font-size:14.5px;color:#fff;">뎁스 맵</div>
<div style="left:715.0px;top:1129.0px;width:77.7px;height:27.2px;background:#4a8fe0;border-radius:7px 7px 0 0;"></div><div class="t" style="left:353.9px;width:800px;text-align:center;top:1133.1px;line-height:20px;font-size:14.5px;color:#fff;">변환 관계</div>
<div style="left:648.0px;top:1157.2px;width:274.3px;height:85.4px;background:#30363c;border:2.7px solid #27dcc0;border-radius:3px 11px 0 0;"></div><div class="t" style="left:663.0px;top:1170.7px;line-height:20px;font-size:14.5px;color:#fff;letter-spacing:-0.06px;">표면 평탄도 측정 (1)</div><div class="t" style="left:663.5px;top:1208.2px;line-height:20px;font-size:14px;color:#a4aab0;letter-spacing:-0.24px;">Time: 146ms</div>
<div style="left:838.0px;top:1168.2px;width:32.0px;height:32.0px;background:#30555a;border:1.3px solid #5c8c8a;border-radius:7px;"></div><svg style="position:absolute;left:838.0px;top:1168.2px;" width="32.0" height="32.0" viewBox="0 0 32 32"><rect x="9" y="6.5" width="14" height="4" fill="#7cc8c0"/><path d="M8.5 13 L16 20 L23.5 13" fill="none" stroke="#4be04b" stroke-width="2.6"/><path d="M9.5 21 L16 27 L22.5 21" fill="none" stroke="#3f9a58" stroke-width="2"/></svg>
<div style="left:880.0px;top:1168.2px;width:32.0px;height:32.0px;background:#30555a;border:1.3px solid #5c8c8a;border-radius:7px;"></div><svg style="position:absolute;left:880.0px;top:1168.2px;" width="32.0" height="32.0" viewBox="0 0 32 32"><path d="M13 6 H19 V14 H23.5 L16 22 L8.5 14 H13 Z" fill="#4be04b"/><rect x="14" y="23" width="4" height="4" fill="#5cc8b0"/></svg>
<svg style="position:absolute;left:880.0px;top:1205.5px;" width="32.0" height="28.0" viewBox="0 0 32 28"><path d="M5.8 7.5 C9.5 1.2 20.5 1.2 24.2 7.5 C20.5 13.8 9.5 13.8 5.8 7.5 Z" fill="none" stroke="#fff" stroke-width="1.7"/><circle cx="15" cy="7.3" r="2.9" fill="#fff"/><path d="M15 26.5 C17.5 20 21 16.2 24 17.8 C26.5 19.5 28.5 23 30 26.5 Z" fill="#62aa98"/><path d="M0 26.5 V20.5 C3 15.5 8 12.5 11.5 15 C15 17.5 18 22 20 26.5 Z" fill="#5bdc62"/></svg>
<div style="left:649.2px;top:1244.5px;width:91.3px;height:26.0px;background:#8a4868;border-radius:0 0 7px 7px;"></div><div class="t" style="left:294.9px;width:800px;text-align:center;top:1247.0px;line-height:20px;font-size:14.5px;color:#fff;">전역 평탄도</div>
<div style="left:742.8px;top:1244.5px;width:122.5px;height:26.0px;background:#5cdcb6;border-radius:0 0 7px 7px;"></div><div class="t" style="left:404.0px;width:800px;text-align:center;top:1247.0px;line-height:20px;font-size:14.5px;color:#fff;">전역 피팅된 평면</div>
<div style="left:649.2px;top:1404.8px;width:59.8px;height:27.0px;background:#5cdcb6;border-radius:7px 7px 0 0;"></div><div class="t" style="left:279.1px;width:800px;text-align:center;top:1408.8px;line-height:20px;font-size:14.5px;color:#fff;">특징점</div>
<div style="left:711.7px;top:1404.8px;width:77.0px;height:27.0px;background:#5cdcb6;border-radius:7px 7px 0 0;"></div><div class="t" style="left:350.2px;width:800px;text-align:center;top:1408.8px;line-height:20px;font-size:14.5px;color:#fff;">참조 특징</div>
<div style="left:791.5px;top:1404.8px;width:63.1px;height:27.0px;background:#4a9a88;border-radius:7px 7px 0 0;"></div><div class="t" style="left:423.0px;width:800px;text-align:center;top:1408.8px;line-height:20px;font-size:14.5px;color:#fff;">뎁스 맵</div>
<div style="left:648.0px;top:1433.0px;width:251.0px;height:84.5px;background:#30363c;border:2.7px solid #27dcc0;border-radius:3px 11px 0 0;"></div><div class="t" style="left:663.0px;top:1446.5px;line-height:20px;font-size:14.5px;color:#fff;letter-spacing:-0.01px;">특징별로 치수 측정 (2)</div><div class="t" style="left:663.5px;top:1484.0px;line-height:20px;font-size:14px;color:#a4aab0;letter-spacing:-0.06px;">Time: &lt;1ms</div>
<div style="left:815.3px;top:1443.3px;width:32.0px;height:32.0px;background:#30555a;border:1.3px solid #5c8c8a;border-radius:7px;"></div><svg style="position:absolute;left:815.3px;top:1443.3px;" width="32.0" height="32.0" viewBox="0 0 32 32"><rect x="9" y="6.5" width="14" height="4" fill="#7cc8c0"/><path d="M8.5 13 L16 20 L23.5 13" fill="none" stroke="#4be04b" stroke-width="2.6"/><path d="M9.5 21 L16 27 L22.5 21" fill="none" stroke="#3f9a58" stroke-width="2"/></svg>
<div style="left:856.6px;top:1443.3px;width:32.0px;height:32.0px;background:#30555a;border:1.3px solid #5c8c8a;border-radius:7px;"></div><svg style="position:absolute;left:856.6px;top:1443.3px;" width="32.0" height="32.0" viewBox="0 0 32 32"><path d="M13 6 H19 V14 H23.5 L16 22 L8.5 14 H13 Z" fill="#4be04b"/><rect x="14" y="23" width="4" height="4" fill="#5cc8b0"/></svg>
<svg style="position:absolute;left:857.0px;top:1481.5px;" width="32.0" height="28.0" viewBox="0 0 32 28"><path d="M5.8 7.5 C9.5 1.2 20.5 1.2 24.2 7.5 C20.5 13.8 9.5 13.8 5.8 7.5 Z" fill="none" stroke="#fff" stroke-width="1.7"/><circle cx="15" cy="7.3" r="2.9" fill="#fff"/><path d="M15 26.5 C17.5 20 21 16.2 24 17.8 C26.5 19.5 28.5 23 30 26.5 Z" fill="#62aa98"/><path d="M0 26.5 V20.5 C3 15.5 8 12.5 11.5 15 C15 17.5 18 22 20 26.5 Z" fill="#5bdc62"/></svg>
<div style="left:649.2px;top:1519.7px;width:46.1px;height:26.0px;background:#8a4868;border-radius:0 0 7px 7px;"></div><div class="t" style="left:272.2px;width:800px;text-align:center;top:1522.2px;line-height:20px;font-size:14.5px;color:#fff;">높이</div>
<div style="left:990.6px;top:1404.8px;width:60.4px;height:27.0px;background:#5cdcb6;border-radius:7px 7px 0 0;"></div><div class="t" style="left:620.8px;width:800px;text-align:center;top:1408.8px;line-height:20px;font-size:14.5px;color:#fff;">특징점</div>
<div style="left:1054.0px;top:1404.8px;width:76.5px;height:27.0px;background:#5cdcb6;border-radius:7px 7px 0 0;"></div><div class="t" style="left:692.2px;width:800px;text-align:center;top:1408.8px;line-height:20px;font-size:14.5px;color:#fff;">참조 특징</div>
<div style="left:1133.0px;top:1404.8px;width:63.7px;height:27.0px;background:#4a9a88;border-radius:7px 7px 0 0;"></div><div class="t" style="left:764.8px;width:800px;text-align:center;top:1408.8px;line-height:20px;font-size:14.5px;color:#fff;">뎁스 맵</div>
<div style="left:989.5px;top:1433.0px;width:251.2px;height:84.5px;background:#30363c;border:2.7px solid #27dcc0;border-radius:3px 11px 0 0;"></div><div class="t" style="left:1004.5px;top:1446.5px;line-height:20px;font-size:14.5px;color:#fff;letter-spacing:-0.01px;">특징별로 치수 측정 (1)</div><div class="t" style="left:1005.0px;top:1484.0px;line-height:20px;font-size:14px;color:#a4aab0;letter-spacing:-0.06px;">Time: &lt;1ms</div>
<div style="left:1156.5px;top:1443.3px;width:32.0px;height:32.0px;background:#30555a;border:1.3px solid #5c8c8a;border-radius:7px;"></div><svg style="position:absolute;left:1156.5px;top:1443.3px;" width="32.0" height="32.0" viewBox="0 0 32 32"><rect x="9" y="6.5" width="14" height="4" fill="#7cc8c0"/><path d="M8.5 13 L16 20 L23.5 13" fill="none" stroke="#4be04b" stroke-width="2.6"/><path d="M9.5 21 L16 27 L22.5 21" fill="none" stroke="#3f9a58" stroke-width="2"/></svg>
<div style="left:1198.0px;top:1443.3px;width:32.0px;height:32.0px;background:#30555a;border:1.3px solid #5c8c8a;border-radius:7px;"></div><svg style="position:absolute;left:1198.0px;top:1443.3px;" width="32.0" height="32.0" viewBox="0 0 32 32"><path d="M13 6 H19 V14 H23.5 L16 22 L8.5 14 H13 Z" fill="#4be04b"/><rect x="14" y="23" width="4" height="4" fill="#5cc8b0"/></svg>
<svg style="position:absolute;left:1198.5px;top:1481.5px;" width="32.0" height="28.0" viewBox="0 0 32 28"><path d="M5.8 7.5 C9.5 1.2 20.5 1.2 24.2 7.5 C20.5 13.8 9.5 13.8 5.8 7.5 Z" fill="none" stroke="#fff" stroke-width="1.7"/><circle cx="15" cy="7.3" r="2.9" fill="#fff"/><path d="M15 26.5 C17.5 20 21 16.2 24 17.8 C26.5 19.5 28.5 23 30 26.5 Z" fill="#62aa98"/><path d="M0 26.5 V20.5 C3 15.5 8 12.5 11.5 15 C15 17.5 18 22 20 26.5 Z" fill="#5bdc62"/></svg>
<div style="left:990.6px;top:1519.7px;width:46.4px;height:26.0px;background:#8a4868;border-radius:0 0 7px 7px;"></div><div class="t" style="left:613.8px;width:800px;text-align:center;top:1522.2px;line-height:20px;font-size:14.5px;color:#fff;">높이</div>
<div style="left:503.0px;top:2007.0px;width:1792.0px;height:39.0px;background:#1b1b1b;"></div>
<div class="t" style="left:516.0px;top:2010.0px;line-height:34px;font-size:24px;color:#fff;letter-spacing:1.00px;">스텝 설명</div>
<svg style="position:absolute;left:2268.0px;top:2021.0px;" width="18.0" height="11.0" viewBox="0 0 18 11"><path d="M1.5 10 L9 2 L16.5 10" fill="none" stroke="#9a9a9a" stroke-width="2.2"/></svg>
<div style="left:503.0px;top:2051.0px;width:3590.0px;height:23.0px;background:#1b1b1b;"></div>
<div class="t" style="left:516.0px;top:2054.0px;line-height:34px;font-size:24px;color:#fff;letter-spacing:0.83px;">로그</div>
<svg style="position:absolute;left:4063.0px;top:2064.0px;" width="18.0" height="11.0" viewBox="0 0 18 11"><path d="M1.5 10 L9 2 L16.5 10" fill="none" stroke="#9a9a9a" stroke-width="2.2"/></svg>
<!-- p3_params -->
<div style="left:1651.0px;top:109.0px;width:646.0px;height:81.5px;background:#262626;"></div>
<div style="left:1705.0px;top:125.5px;width:22.0px;height:13.0px;background:#3c3c3c;border:1px solid #4a4a4a;"></div>
<svg style="position:absolute;left:1705.0px;top:125.5px;" width="22.0" height="13.0" viewBox="0 0 22 13"><circle cx="11.5" cy="6.5" r="3.6" fill="none" stroke="#fff" stroke-width="1.8" stroke-dasharray="1.6 1.2"/><rect x="18" y="2" width="1.8" height="1.8" fill="#fff"/></svg>
<svg style="position:absolute;left:1678.0px;top:148.0px;" width="54.0" height="26.0" viewBox="0 0 54 26"><path d="M3 3.5 L51 23" stroke="#e0343f" stroke-width="2.2"/></svg>
<div class="t" style="left:1750.0px;top:134.0px;line-height:31px;font-size:22.5px;color:#e6e6e6;letter-spacing:0.56px;">3D线激光轮廓测量仪_1</div>
<div style="left:1652.0px;top:191.5px;width:643.0px;height:1810.5px;background:#282828;border-top:1.5px solid #1a1a1a;border-left:1.5px solid #1a1a1a;"></div>
<div style="left:2280.8px;top:197.0px;width:8.2px;height:1232.0px;background:#414141;border-radius:4px;"></div>
<div style="left:1670.8px;top:209.0px;width:604.0px;height:59.7px;background:#1b1b1b;"></div>
<div class="t" style="left:1696.8px;top:218.0px;line-height:42px;font-size:30px;color:#fff;font-weight:700;letter-spacing:-2.50px;">입력</div>
<div style="left:1670.8px;top:289.0px;width:604.0px;height:1713.0px;background:#1b1b1b;"></div>
<div class="t" style="left:1696.8px;top:298.0px;line-height:42px;font-size:30px;color:#fff;font-weight:700;letter-spacing:-0.57px;">파라미터</div>
<div style="left:1670.8px;top:349.0px;width:604.0px;height:3.3px;background:#4c4c4c;"></div>
<div class="t" style="left:1736.5px;top:368.0px;line-height:35px;font-size:25px;color:#fff;letter-spacing:0.51px;">카메라 유형</div>
<svg style="position:absolute;left:1700.5px;top:409.5px;" width="21.0" height="11.5" viewBox="0 0 21 11.5"><path d="M0 0 H21 V2 L10.5 11.5 L0 2 Z" fill="#fff"/></svg>
<div style="left:1735.0px;top:410.7px;width:515.5px;height:43.8px;background:#2d2d2d;border:1.5px solid #5c5c5c;border-radius:4px;"></div>
<div class="t" style="left:1753.5px;top:415.5px;line-height:36px;font-size:26px;color:#fff;letter-spacing:-0.88px;">LNXCamera</div>
<svg style="position:absolute;left:2217.5px;top:428.5px;" width="17.0" height="10.0" viewBox="0 0 17 10"><path d="M0 0 H17 L8.5 10 Z" fill="#fff"/></svg>
<div style="left:1679.0px;top:466.5px;width:587.5px;height:39.9px;background:#262626;border-radius:4px;"></div>
<div class="t" style="left:1696.8px;top:469.3px;line-height:35px;font-size:25px;color:#fff;letter-spacing:0.51px;">기본 설정</div>
<div style="left:1679.0px;top:514.5px;width:587.5px;height:64.1px;background:#262626;border-radius:4px;"></div>
<div class="t" style="left:1696.8px;top:529.5px;line-height:35px;font-size:25px;color:#fff;letter-spacing:0.51px;">가상 모드</div>
<div style="left:2194.7px;top:533.0px;width:56.5px;height:28.0px;background:#555;border-radius:14px;"></div><div style="left:2198.7px;top:537.0px;width:20.0px;height:20.0px;background:#fff;border-radius:50%;"></div>
<div style="left:1679.0px;top:587.0px;width:587.5px;height:185.4px;background:#262626;border-radius:4px;"></div>
<div class="t" style="left:1696.8px;top:595.2px;line-height:35px;font-size:25px;color:#fff;letter-spacing:0.61px;">카메라 ID</div>
<div style="left:1696.6px;top:644.8px;width:552.0px;height:41.9px;background:linear-gradient(#4c4c4c,#3c3c3c);border:1.5px solid #666;border-radius:4px;"></div>
<svg style="position:absolute;left:1882.0px;top:653.5px;" width="22.0" height="24.0" viewBox="0 0 22 24"><path d="M11 1.2 L20.5 6.6 V17.4 L11 22.8 L1.5 17.4 V6.6 Z" fill="none" stroke="#fff" stroke-width="2"/><circle cx="11" cy="12" r="4.3" fill="none" stroke="#fff" stroke-width="2"/></svg>
<div class="t" style="left:1914.0px;top:647.5px;line-height:36px;font-size:26px;color:#fff;letter-spacing:-0.29px;">편집기를 열기</div>
<div style="left:1695.0px;top:701.4px;width:555.5px;height:49.1px;background:#181818;border:1.5px solid #5c5c5c;border-radius:4px;"></div><div class="t" style="left:1717.9px;top:709.0px;line-height:36px;font-size:26px;color:#fff;letter-spacing:-0.85px;">LW300241A205YD04</div>
<div style="left:1679.0px;top:781.0px;width:587.5px;height:111.8px;background:#262626;border-radius:4px;"></div>
<div class="t" style="left:1696.8px;top:788.5px;line-height:35px;font-size:25px;color:#fff;letter-spacing:0.94px;">카메라 캘리브레이션 파라미터</div>
<div style="left:1695.0px;top:831.0px;width:555.5px;height:46.0px;background:#181818;border:1.5px solid #5c5c5c;border-radius:4px;"></div><div class="t" style="left:1717.9px;top:837.0px;line-height:36px;font-size:26px;color:#fff;letter-spacing:-0.85px;">LW300241A205YD04</div><div style="left:2204.5px;top:832.5px;width:44.5px;height:43.0px;background:#2c2c2c;border-radius:0 3px 3px 0;"></div><svg style="position:absolute;left:2219.0px;top:850.0px;" width="17.0" height="10.0" viewBox="0 0 17 10"><path d="M0 0 H17 L8.5 10 Z" fill="#fff"/></svg>
<div style="left:1679.0px;top:900.8px;width:587.5px;height:112.2px;background:#262626;border-radius:4px;"></div>
<div class="t" style="left:1696.8px;top:908.2px;line-height:35px;font-size:25px;color:#fff;letter-spacing:0.90px;">파라미터 그룹 구성</div>
<div style="left:1695.0px;top:951.4px;width:555.5px;height:45.1px;background:#363636;border:1.5px solid #5c5c5c;border-radius:4px;"></div><div class="t" style="left:1718.0px;top:957.0px;line-height:36px;font-size:26px;color:#6e6e6e;letter-spacing:0.27px;">default</div><div style="left:2204.5px;top:952.9px;width:44.5px;height:42.1px;background:#404040;border-radius:0 3px 3px 0;"></div><svg style="position:absolute;left:2219.0px;top:970.0px;" width="17.0" height="10.0" viewBox="0 0 17 10"><path d="M0 0 H17 L8.5 10 Z" fill="#6e6e6e"/></svg>
<div style="left:1679.0px;top:1021.0px;width:587.5px;height:111.5px;background:#262626;border-radius:4px;"></div>
<div class="t" style="left:1696.8px;top:1028.5px;line-height:35px;font-size:25px;color:#fff;letter-spacing:-0.03px;">IP 주소</div>
<div style="left:1695.0px;top:1071.0px;width:555.5px;height:44.8px;background:#181818;border:1.5px solid #5c5c5c;border-radius:4px;"></div><div class="t" style="left:1717.9px;top:1076.4px;line-height:36px;font-size:26px;color:#fff;letter-spacing:-0.78px;">192.168.10.152</div>
<div style="left:1679.0px;top:1141.0px;width:587.5px;height:39.4px;background:#262626;border-radius:4px;"></div>
<div class="t" style="left:1696.8px;top:1143.5px;line-height:35px;font-size:25px;color:#fff;letter-spacing:0.81px;">트리거 설정</div>
<div style="left:1679.0px;top:1188.7px;width:587.5px;height:109.7px;background:#262626;border-radius:4px;"></div>
<div class="t" style="left:1696.8px;top:1196.9px;line-height:35px;font-size:25px;color:#fff;letter-spacing:0.51px;">제한 시간</div>
<div style="left:1695.0px;top:1239.4px;width:555.5px;height:43.0px;background:#181818;border:1.5px solid #5c5c5c;border-radius:4px;"></div><div class="t" style="left:1717.8px;top:1243.9px;line-height:36px;font-size:26px;color:#fff;letter-spacing:-0.66px;">20000 ms</div><div style="left:2203.5px;top:1240.9px;width:1.5px;height:40.0px;background:#5c5c5c;"></div><div style="left:2203.5px;top:1260.4px;width:45.5px;height:1.5px;background:#5c5c5c;"></div><svg style="position:absolute;left:2220.5px;top:1248.4px;" width="11.0" height="7.0" viewBox="0 0 11 7"><path d="M0 7 H11 L5.5 0 Z" fill="#8a8a8a"/></svg><svg style="position:absolute;left:2220.5px;top:1267.9px;" width="11.0" height="7.0" viewBox="0 0 11 7"><path d="M0 0 H11 L5.5 7 Z" fill="#8a8a8a"/></svg>
<div style="left:1679.0px;top:1306.3px;width:587.5px;height:110.5px;background:#262626;border-radius:4px;"></div>
<div class="t" style="left:1696.8px;top:1314.5px;line-height:35px;font-size:25px;color:#fff;letter-spacing:0.90px;">프레임 트리거 소스</div>
<div style="left:1695.0px;top:1357.0px;width:555.5px;height:43.8px;background:#363636;border:1.5px solid #5c5c5c;border-radius:4px;"></div><div class="t" style="left:1714.0px;top:1361.9px;line-height:36px;font-size:26px;color:#6e6e6e;letter-spacing:-0.73px;">External</div><svg style="position:absolute;left:2219.0px;top:1374.9px;" width="17.0" height="10.0" viewBox="0 0 17 10"><path d="M0 0 H17 L8.5 10 Z" fill="#6e6e6e"/></svg>
<div style="left:1679.0px;top:1424.8px;width:587.5px;height:63.8px;background:#262626;border-radius:4px;"></div>
<div class="t" style="left:1696.8px;top:1439.5px;line-height:35px;font-size:25px;color:#fff;letter-spacing:0.76px;">데이터 획득 현황</div>
<div style="left:2194.7px;top:1442.7px;width:56.5px;height:28.0px;background:#1a7ee0;border-radius:14px;"></div><div style="left:2226.7px;top:1446.7px;width:20.0px;height:20.0px;background:#fff;border-radius:50%;"></div>
<div style="left:1679.0px;top:1496.5px;width:587.5px;height:110.0px;background:#262626;border-radius:4px;"></div>
<div class="t" style="left:1696.8px;top:1504.0px;line-height:35px;font-size:25px;color:#fff;letter-spacing:0.76px;">라인 트리거 소스</div>
<div style="left:1695.0px;top:1546.5px;width:555.5px;height:43.5px;background:#363636;border:1.5px solid #5c5c5c;border-radius:4px;"></div><div class="t" style="left:1714.0px;top:1551.2px;line-height:36px;font-size:26px;color:#6e6e6e;letter-spacing:-0.51px;">Encoder</div><svg style="position:absolute;left:2219.0px;top:1564.2px;" width="17.0" height="10.0" viewBox="0 0 17 10"><path d="M0 0 H17 L8.5 10 Z" fill="#6e6e6e"/></svg>
<div style="left:1679.0px;top:1614.8px;width:587.5px;height:109.2px;background:#262626;border-radius:4px;"></div>
<div class="t" style="left:1696.8px;top:1622.2px;line-height:35px;font-size:25px;color:#fff;letter-spacing:0.82px;">최대 행 수</div>
<div style="left:1695.0px;top:1665.3px;width:555.5px;height:43.0px;background:#363636;border:1.5px solid #5c5c5c;border-radius:4px;"></div><div class="t" style="left:1717.6px;top:1669.8px;line-height:36px;font-size:26px;color:#6e6e6e;letter-spacing:-1.01px;">2860</div><div style="left:2203.5px;top:1666.8px;width:1.5px;height:40.0px;background:#5c5c5c;"></div><div style="left:2203.5px;top:1686.3px;width:45.5px;height:1.5px;background:#5c5c5c;"></div><svg style="position:absolute;left:2220.5px;top:1674.3px;" width="11.0" height="7.0" viewBox="0 0 11 7"><path d="M0 7 H11 L5.5 0 Z" fill="#8a8a8a"/></svg><svg style="position:absolute;left:2220.5px;top:1693.8px;" width="11.0" height="7.0" viewBox="0 0 11 7"><path d="M0 0 H11 L5.5 7 Z" fill="#8a8a8a"/></svg>
<div style="left:1679.0px;top:1732.9px;width:587.5px;height:109.1px;background:#262626;border-radius:4px;"></div>
<div class="t" style="left:1696.8px;top:1740.2px;line-height:35px;font-size:25px;color:#fff;letter-spacing:-0.04px;">Y 해상도</div>
<div style="left:1695.0px;top:1783.4px;width:555.5px;height:42.9px;background:#181818;border:1.5px solid #5c5c5c;border-radius:4px;"></div><div class="t" style="left:1717.6px;top:1787.8px;line-height:36px;font-size:26px;color:#fff;letter-spacing:-0.46px;">0.1320 mm</div><div style="left:2203.5px;top:1784.9px;width:1.5px;height:39.9px;background:#5c5c5c;"></div><div style="left:2203.5px;top:1804.3px;width:45.5px;height:1.5px;background:#5c5c5c;"></div><svg style="position:absolute;left:2220.5px;top:1792.4px;" width="11.0" height="7.0" viewBox="0 0 11 7"><path d="M0 7 H11 L5.5 0 Z" fill="#8a8a8a"/></svg><svg style="position:absolute;left:2220.5px;top:1811.8px;" width="11.0" height="7.0" viewBox="0 0 11 7"><path d="M0 0 H11 L5.5 7 Z" fill="#8a8a8a"/></svg>
<div style="left:1679.0px;top:1851.0px;width:587.5px;height:109.0px;background:#262626;border-radius:4px;"></div>
<div class="t" style="left:1696.8px;top:1858.3px;line-height:35px;font-size:25px;color:#fff;letter-spacing:0.81px;">트리거 간격</div>
<div style="left:1695.0px;top:1901.0px;width:555.5px;height:43.3px;background:#363636;border:1.5px solid #5c5c5c;border-radius:4px;"></div><div class="t" style="left:1717.6px;top:1905.7px;line-height:36px;font-size:26px;color:#6e6e6e;letter-spacing:-1.25px;">132</div><div style="left:2203.5px;top:1902.5px;width:1.5px;height:40.3px;background:#5c5c5c;"></div><div style="left:2203.5px;top:1922.2px;width:45.5px;height:1.5px;background:#5c5c5c;"></div><svg style="position:absolute;left:2220.5px;top:1910.0px;" width="11.0" height="7.0" viewBox="0 0 11 7"><path d="M0 7 H11 L5.5 0 Z" fill="#8a8a8a"/></svg><svg style="position:absolute;left:2220.5px;top:1929.8px;" width="11.0" height="7.0" viewBox="0 0 11 7"><path d="M0 0 H11 L5.5 7 Z" fill="#8a8a8a"/></svg>
<div style="left:1679.0px;top:1968.6px;width:587.5px;height:33.4px;background:#262626;border-radius:4px 4px 0 0;"></div>
<div class="t" style="left:1696.8px;top:1970.5px;line-height:35px;font-size:25px;color:#fff;letter-spacing:0.51px;">기타 설정</div>
<div style="left:1649.0px;top:1042.8px;width:2.2px;height:3.6px;background:#6e6e6e;"></div>
<div style="left:1649.0px;top:1048.9px;width:2.2px;height:3.6px;background:#6e6e6e;"></div>
<div style="left:1649.0px;top:1055.0px;width:2.2px;height:3.6px;background:#6e6e6e;"></div>
<div style="left:1649.0px;top:1061.1px;width:2.2px;height:3.6px;background:#6e6e6e;"></div>
<div style="left:1649.0px;top:1067.2px;width:2.2px;height:3.6px;background:#6e6e6e;"></div>
<div style="left:1649.0px;top:1073.3px;width:2.2px;height:3.6px;background:#6e6e6e;"></div>
<div style="left:1651.2px;top:109.0px;width:1.0px;height:1893.0px;background:#333;"></div>
<div style="left:1647.0px;top:2002.0px;width:654.0px;height:5.0px;background:#000;"></div>
<!-- p4_viewer -->
<div style="left:2301.0px;top:65.0px;width:1792.0px;height:44.0px;background:#363636;"></div>
<div class="t" style="left:2315.0px;top:69.5px;line-height:34px;font-size:24px;color:#fff;letter-spacing:0.98px;">데이터 뷰어</div>
<div style="left:2301.0px;top:109.0px;width:1792.0px;height:80.0px;background:#1b1b1b;"></div>
<div style="left:2324.7px;top:128.7px;width:40.3px;height:40.3px;background:#4a4a4a;border:2px solid #f2f2f2;"></div>
<svg style="position:absolute;left:2324.7px;top:128.7px;" width="40.3" height="40.3" viewBox="0 0 40.3 40.3"><g fill="none" stroke="#fff" stroke-width="1.5"><path d="M7 13 L17.5 5.5 L33.5 10 L23 18 Z M7 13 V30 L23 34.5 V18 M33.5 10 V26.5 L23 34.5"/><path d="M17.5 5.5 V22 L7 30 M17.5 22 L33.5 26.5" stroke-dasharray="2.2 1.8" stroke-width="1.2"/></g><g fill="#fff"><circle cx="7" cy="13" r="2.2"/><circle cx="17.5" cy="5.5" r="2.2"/><circle cx="33.5" cy="10" r="2.2"/><circle cx="23" cy="18" r="2.2"/><circle cx="7" cy="30" r="2.2"/><circle cx="23" cy="34.5" r="2.2"/><circle cx="33.5" cy="26.5" r="2.2"/><path d="M17.5 18.5 L20.5 24 H14.5 Z"/></g></svg>
<svg style="position:absolute;left:2394.8px;top:135.0px;" width="28.5" height="28.0" viewBox="0 0 28.5 28"><rect x="1" y="1" width="26.5" height="26" fill="none" stroke="#fff" stroke-width="2"/><path d="M1 17 L17 1 M1 27 L27.5 1 M12 27 L27.5 11.5" stroke="#fff" stroke-width="1.8"/></svg>
<svg style="position:absolute;left:2456.8px;top:133.0px;" width="32.2" height="32.2" viewBox="0 0 32.2 32.2"><rect x="1.2" y="1.2" width="29.8" height="29.8" fill="none" stroke="#fff" stroke-width="2.4"/><path d="M5 19.5 H8 C12 19.5 12 10 16.2 10 C20.4 10 20.4 19.5 24.4 19.5 H27.5" fill="none" stroke="#fff" stroke-width="2"/></svg>
<div style="left:2505.3px;top:137.0px;width:1.5px;height:24.0px;background:#5a5a5a;"></div>
<svg style="position:absolute;left:2523.0px;top:133.0px;" width="32.0" height="32.0" viewBox="0 0 32 32"><circle cx="4" cy="4" r="3.2" fill="#fff"/><circle cx="4" cy="16" r="3.2" fill="#fff"/><circle cx="4" cy="28" r="3.2" fill="#fff"/><circle cx="16" cy="4" r="3.2" fill="#fff"/><circle cx="16" cy="16" r="3.2" fill="#fff"/><circle cx="16" cy="28" r="3.2" fill="#fff"/><circle cx="28" cy="4" r="3.2" fill="#fff"/><circle cx="28" cy="16" r="3.2" fill="#fff"/><circle cx="28" cy="28" r="3.2" fill="#fff"/></svg>
<div style="left:2583.0px;top:128.7px;width:40.0px;height:40.3px;background:#4a4a4a;border:2px solid #f2f2f2;"></div>
<svg style="position:absolute;left:2587.0px;top:133.0px;" width="32.0" height="32.0" viewBox="0 0 32 32"><circle cx="4" cy="4" r="3.2" fill="#ff0000"/><circle cx="4" cy="16" r="3.2" fill="#ffa800"/><circle cx="4" cy="28" r="3.2" fill="#1e9cff"/><circle cx="16" cy="4" r="3.2" fill="#ff0000"/><circle cx="16" cy="16" r="3.2" fill="#ffa800"/><circle cx="16" cy="28" r="3.2" fill="#1e9cff"/><circle cx="28" cy="4" r="3.2" fill="#ff0000"/><circle cx="28" cy="16" r="3.2" fill="#ffa800"/><circle cx="28" cy="28" r="3.2" fill="#1e9cff"/></svg>
<svg style="position:absolute;left:2651.0px;top:133.0px;" width="32.0" height="32.0" viewBox="0 0 32 32"><circle cx="4" cy="4" r="3.2" fill="#cacaca"/><circle cx="4" cy="16" r="3.2" fill="#949494"/><circle cx="4" cy="28" r="3.2" fill="#626262"/><circle cx="16" cy="4" r="3.2" fill="#cacaca"/><circle cx="16" cy="16" r="3.2" fill="#949494"/><circle cx="16" cy="28" r="3.2" fill="#626262"/><circle cx="28" cy="4" r="3.2" fill="#cacaca"/><circle cx="28" cy="16" r="3.2" fill="#949494"/><circle cx="28" cy="28" r="3.2" fill="#626262"/></svg>
<svg style="position:absolute;left:2715.0px;top:131.0px;" width="32.0" height="36.0" viewBox="0 0 32 36"><ellipse cx="16" cy="5.5" rx="5" ry="3" fill="#3e3e3e"/><ellipse cx="5.5" cy="11.5" rx="5" ry="3" fill="#383838"/><ellipse cx="26.5" cy="11.5" rx="5" ry="3" fill="#383838"/><ellipse cx="16" cy="17.5" rx="5" ry="3" fill="#2e2e2e"/><path d="M1 20 L16 26.5 L31 20 M1 26 L16 32.5 L31 26" fill="none" stroke="#4e4e4e" stroke-width="1.5"/></svg>
<svg style="position:absolute;left:2779.0px;top:131.0px;" width="32.0" height="36.0" viewBox="0 0 32 36"><ellipse cx="16" cy="5.5" rx="5" ry="3" fill="#861818"/><ellipse cx="5.5" cy="11.5" rx="5" ry="3" fill="#86660e"/><ellipse cx="26.5" cy="11.5" rx="5" ry="3" fill="#94740e"/><ellipse cx="16" cy="17.5" rx="5" ry="3" fill="#14508e"/><path d="M1 20 L16 26.5 L31 20 M1 26 L16 32.5 L31 26" fill="none" stroke="#5a5a5a" stroke-width="1.5"/></svg>
<div style="left:2827.6px;top:137.0px;width:1.4px;height:24.0px;background:#5a5a5a;"></div>
<div class="t" style="left:2848.6px;top:130.5px;line-height:35px;font-size:25px;color:#fff;letter-spacing:0.25px;">포인트 클라우드 설정</div>
<svg style="position:absolute;left:3088.0px;top:139.5px;" width="11.5" height="19.0" viewBox="0 0 11.5 19"><path d="M0 0 L11.5 9.5 L0 19 Z" fill="#fff"/></svg>
<svg style="position:absolute;left:4033.0px;top:133.5px;" width="32.0" height="31.5" viewBox="0 0 32 31.5"><rect x="1.2" y="1.2" width="29.6" height="29.1" rx="3" fill="none" stroke="#fff" stroke-width="2.2"/><path d="M8 23.5 L24 8 M15.5 8 H24 V16 M8 15.5 V23.5 H16.5" fill="none" stroke="#fff" stroke-width="1.8"/></svg>
<div style="left:2301.0px;top:189.0px;width:213.5px;height:1341.5px;background:#252525;border-top:2px solid #303030;border-right:1.5px solid #3c3c3c;"></div>
<svg style="position:absolute;left:2478.5px;top:209.3px;" width="17.0" height="16.0" viewBox="0 0 17 16"><path d="M1.2 1.2 L15.8 14.8 M15.8 1.2 L1.2 14.8" stroke="#fff" stroke-width="2.4"/></svg>
<div class="t" style="left:2318.0px;top:268.0px;line-height:34px;font-size:24px;color:#fff;">Cloud setting</div>
<div style="left:2319.0px;top:341.7px;width:27.3px;height:26.3px;background:#1a1a1a;border:1.6px solid #505050;border-radius:2px;"></div>
<div class="t" style="left:2363.0px;top:336.5px;line-height:35px;font-size:25px;color:#fff;letter-spacing:-0.11px;">자동 조정</div>
<div style="left:2302.0px;top:423.6px;width:16.0px;height:1.4px;background:#5a5a5a;"></div>
<div class="t" style="left:2331.5px;top:408.8px;line-height:34px;font-size:24px;color:#fff;letter-spacing:-2.70px;">38</div>
<div style="left:2302.0px;top:531.8px;width:16.0px;height:1.4px;background:#5a5a5a;"></div>
<div class="t" style="left:2331.5px;top:517.0px;line-height:34px;font-size:24px;color:#fff;letter-spacing:-1.57px;">33.7</div>
<div style="left:2302.0px;top:639.4px;width:16.0px;height:1.4px;background:#5a5a5a;"></div>
<div class="t" style="left:2331.5px;top:624.6px;line-height:34px;font-size:24px;color:#fff;letter-spacing:-1.57px;">29.4</div>
<div style="left:2302.0px;top:747.8px;width:16.0px;height:1.4px;background:#5a5a5a;"></div>
<div class="t" style="left:2331.5px;top:733.0px;line-height:34px;font-size:24px;color:#fff;letter-spacing:-1.91px;">25.1</div>
<div style="left:2302.0px;top:855.8px;width:16.0px;height:1.4px;background:#5a5a5a;"></div>
<div class="t" style="left:2331.5px;top:841.0px;line-height:34px;font-size:24px;color:#fff;letter-spacing:-1.57px;">20.8</div>
<div style="left:2302.0px;top:963.6px;width:16.0px;height:1.4px;background:#5a5a5a;"></div>
<div class="t" style="left:2331.5px;top:948.8px;line-height:34px;font-size:24px;color:#fff;letter-spacing:-1.91px;">16.5</div>
<div style="left:2302.0px;top:1071.8px;width:16.0px;height:1.4px;background:#5a5a5a;"></div>
<div class="t" style="left:2331.5px;top:1057.0px;line-height:34px;font-size:24px;color:#fff;letter-spacing:-1.91px;">12.2</div>
<div style="left:2302.0px;top:1179.3px;width:16.0px;height:1.4px;background:#5a5a5a;"></div>
<div class="t" style="left:2331.5px;top:1164.5px;line-height:34px;font-size:24px;color:#fff;letter-spacing:-1.69px;">7.9</div>
<div style="left:2302.0px;top:1287.8px;width:16.0px;height:1.4px;background:#5a5a5a;"></div>
<div class="t" style="left:2331.5px;top:1273.0px;line-height:34px;font-size:24px;color:#fff;letter-spacing:-1.69px;">3.6</div>
<div style="left:2302.0px;top:1395.4px;width:16.0px;height:1.4px;background:#5a5a5a;"></div>
<div class="t" style="left:2331.5px;top:1380.6px;line-height:34px;font-size:24px;color:#fff;letter-spacing:-1.12px;">-0.7</div>
<div style="left:2302.0px;top:1503.5px;width:16.0px;height:1.4px;background:#5a5a5a;"></div>
<div class="t" style="left:2331.5px;top:1488.7px;line-height:34px;font-size:24px;color:#fff;letter-spacing:-0.34px;">-5</div>
<div style="left:2414.8px;top:427.0px;width:20.0px;height:1103.5px;background:linear-gradient(#e02d22 0px,#e03322 18px,#ee7a2a 60px,#f4e24e 96px,#e2ef6e 108px,#8fa8c8 126px,#1c46f0 152px,#0a20d8 178px,#0000a8 205px,#000080 222px,#000080 100%);"></div>
<div style="left:2408.8px;top:412.0px;width:31.9px;height:30.0px;background:#ecd2d2;border-radius:6px;border:1.5px solid #c8c8c8;"></div><div style="left:2414.5px;top:426.2px;width:20.5px;height:1.8px;background:#111;"></div>
<div style="left:2408.8px;top:624.0px;width:31.9px;height:30.0px;background:#d2d2e4;border-radius:6px;border:1.5px solid #c8c8c8;"></div><div style="left:2414.5px;top:638.2px;width:20.5px;height:1.8px;background:#111;"></div>
<div style="left:2514.5px;top:189.0px;width:1578.5px;height:1341.5px;background:#000;overflow:hidden;"><svg style="position:absolute;left:0.0px;top:0.0px;" width="1578.5" height="1341.5" viewBox="0 0 1578.5 1341.5"><path d="M70.7 1066.9 L816.0 266.2M90.9 1012.2 L691.7 1284.0M92.7 1077.1 L833.6 270.9M131.5 969.2 L726.0 1231.0M114.8 1087.4 L851.4 275.7M170.7 927.5 L759.0 1179.9M137.2 1097.8 L869.3 280.5M208.8 887.1 L790.9 1130.6M182.5 1118.8 L905.3 290.2M281.3 810.1 L851.5 1037.0M205.4 1129.5 L923.5 295.1M316.0 773.4 L880.2 992.6M228.6 1140.3 L941.8 300.0M349.6 737.7 L908.0 949.6M251.9 1151.1 L960.2 304.9M382.2 703.1 L934.9 908.1M299.3 1173.1 L997.4 314.9M444.6 636.9 L986.2 828.8M323.3 1184.3 L1016.2 319.9M474.5 605.2 L1010.6 791.1M347.5 1195.5 L1035.1 325.0M503.6 574.3 L1034.3 754.4M371.9 1206.9 L1054.1 330.1M531.9 544.3 L1057.3 718.9M421.5 1229.9 L1092.4 340.4M586.1 486.7 L1101.3 650.9M446.6 1241.6 L1111.8 345.6M612.2 459.1 L1122.4 618.4M471.9 1253.4 L1131.3 350.8M637.6 432.1 L1142.8 586.8M497.5 1265.3 L1150.9 356.1M662.3 405.9 L1162.7 556.1M549.4 1289.4 L1190.5 366.7M710.0 355.4 L1200.8 497.2M575.7 1301.6 L1210.5 372.1M732.9 331.0 L1219.1 468.9M602.2 1313.9 L1230.6 377.5M755.3 307.3 L1236.9 441.3M629.0 1326.4 L1250.8 382.9M777.1 284.1 L1254.3 414.5" stroke="#858585" stroke-width="0.9" fill="none"/><path d="M48.9 1056.8 L798.4 261.5M48.9 1056.8 L656.1 1339.0M159.7 1108.3 L887.2 285.3M245.6 848.0 L821.7 1083.0M275.5 1162.1 L978.8 309.9M413.9 669.5 L961.0 867.8M396.6 1218.3 L1073.2 335.2M559.4 515.2 L1079.6 684.4M523.3 1277.2 L1170.6 361.4M686.5 380.3 L1182.0 526.2M656.1 1339.0 L1271.2 388.4M798.4 261.5 L1271.2 388.4" stroke="#c4c4c4" stroke-width="1.2" fill="none"/><path d="M656.1 1339.0 L1271.2 388.4" stroke="#00ff00" stroke-width="2" fill="none"/><path d="M1271.2 388.4 L798.4 261.5" stroke="#ff0000" stroke-width="1.6" fill="none"/><path d="M1271.2 388.4 L1290.7 261.0" stroke="#2a6cf0" stroke-width="1.8" fill="none"/><path d="M379.8 1053.8 L381.5 1050.0 L385.7 1048.4 L395.9 1050.4 L406.8 1016.3 L409.7 1013.4 L414.4 1014.6 L695.3 1137.4 L700.4 1141.5 L699.5 1147.9 L681.8 1174.9 L675.9 1179.9 L665.8 1182.5 L657.3 1180.8 L627.8 1168.1 L623.6 1160.5 L382.4 1055.9 ZM460.8 1043.6 L505.9 1063.2 L493.7 1065.2 L448.5 1061.0 ZM451.9 1073.7 L497.1 1072.0 L509.7 1077.0 L496.2 1094.7 ZM527.4 1072.0 L567.9 1089.7 L548.5 1116.7 L505.5 1098.1 ZM575.5 1093.1 L605.9 1105.7 L575.5 1128.5 L557.8 1120.9 ZM615.2 1109.9 L634.6 1118.4 L615.2 1146.2 L586.5 1133.5 ZM632.0 1157.2 L635.4 1156.3 L661.6 1169.0 L659.9 1171.8 ZM439.1 1042.8 L439.5 1044.8 L439.3 1046.9 L438.4 1049.1 L437.0 1051.1 L435.1 1053.0 L432.8 1054.5 L430.2 1055.7 L427.4 1056.5 L424.7 1056.8 L422.0 1056.6 L419.6 1055.9 L417.6 1054.8 L416.0 1053.4 L415.0 1051.6 L414.6 1049.5 L414.9 1047.4 L415.7 1045.3 L417.1 1043.2 L419.0 1041.4 L421.4 1039.8 L424.0 1038.6 L426.7 1037.9 L429.5 1037.6 L432.1 1037.7 L434.5 1038.4 L436.6 1039.5 L438.1 1041.0 ZM670.6 1144.3 L669.6 1146.6 L667.9 1148.6 L665.6 1150.1 L662.7 1151.2 L659.6 1151.7 L656.2 1151.7 L652.8 1151.0 L649.5 1149.9 L646.5 1148.2 L644.0 1146.2 L642.1 1143.9 L640.9 1141.3 L640.4 1138.8 L640.7 1136.3 L641.7 1134.0 L643.4 1132.0 L645.7 1130.4 L648.6 1129.4 L651.7 1128.9 L655.1 1128.9 L658.5 1129.5 L661.8 1130.7 L664.7 1132.3 L667.2 1134.4 L669.2 1136.7 L670.4 1139.2 L670.9 1141.8 Z" fill="#d2e86a" fill-rule="evenodd"/><path d="M180.8 971.9 L185.7 963.3 L196.8 948.5 L210.3 933.8 L215.2 931.7 L220.1 932.6 L245.3 942.4 L253.8 949.2 L256.3 959.0 L250.2 966.3 L244.0 974.9 L237.9 983.5 L240.3 987.2 L237.9 992.1 L232.4 990.9 L219.5 985.4 L212.7 989.7 L207.8 986.0 L185.1 976.2 ZM233.5 953.7 L233.6 955.7 L233.0 957.7 L231.8 959.7 L229.9 961.5 L227.6 963.1 L224.9 964.3 L221.9 965.2 L218.9 965.6 L215.9 965.5 L213.2 965.1 L210.7 964.1 L208.8 962.8 L207.4 961.2 L206.7 959.4 L206.6 957.4 L207.2 955.3 L208.4 953.4 L210.3 951.5 L212.6 950.0 L215.3 948.7 L218.3 947.9 L221.3 947.5 L224.3 947.5 L227.0 948.0 L229.5 948.9 L231.4 950.2 L232.8 951.8 ZM191.9 967.6 L212.7 976.2 L211.5 979.8 L190.7 970.6 Z" fill="#d2e86a" fill-rule="evenodd"/><path d="M251.4 964.5 L258.8 960.2 L268.6 965.1 L285.7 965.7 L298.6 953.5 L301.7 947.9 L306.6 945.2 L317.6 945.7 L366.7 962.9 L372.9 955.3 L380.8 957.5 L374.1 971.9 L386.4 978.6 L388.6 984.1 L384.5 990.9 L379.0 991.1 L329.3 971.9 L324.4 973.7 L317.0 986.0 L312.1 988.7 L262.4 969.4 Z" fill="#d2e86a"/><path d="M300.5 943.3 L300.0 947.7 L298.7 951.9 L296.5 955.7 L293.6 958.8 L290.2 961.2 L286.4 962.6 L282.3 963.1 L278.3 962.6 L274.4 961.2 L271.0 958.8 L268.1 955.7 L265.9 951.9 L264.6 947.7 L264.2 943.3 L264.6 938.8 L265.9 934.6 L268.1 930.9 L271.0 927.7 L274.4 925.4 L278.3 923.9 L282.3 923.4 L286.4 923.9 L290.2 925.4 L293.6 927.7 L296.5 930.9 L298.7 934.6 L300.0 938.8 ZM290.8 936.1 L290.7 937.4 L290.2 938.7 L289.1 939.9 L287.7 941.0 L285.9 941.9 L283.8 942.6 L281.6 943.1 L279.4 943.3 L277.2 943.1 L275.2 942.7 L273.5 942.1 L272.2 941.2 L271.3 940.1 L270.9 938.9 L270.9 937.6 L271.5 936.3 L272.6 935.1 L274.0 934.0 L275.8 933.1 L277.9 932.4 L280.1 931.9 L282.3 931.7 L284.5 931.9 L286.4 932.3 L288.1 932.9 L289.5 933.8 L290.4 934.9 Z" fill="#d2e86a" fill-rule="evenodd"/><path d="M266.7 957.5 L275.9 961.4 L288.2 960.2 L297.4 950.4 L300.5 944.9 L296.8 957.7 L286.4 965.1 L273.5 965.4 Z" fill="#000"/><path d="M250.2 959.0 L254.1 961.1 L234.2 981.3 L231.1 979.2 Z" fill="#000"/><path d="M255.1 936.9 L262.4 935.7 L263.7 941.8 L257.5 947.9 L252.0 944.3 Z" fill="#000"/><path d="M321.3 913.6 L325.0 906.8 L330.5 905.0 L393.7 929.5 L396.8 936.9 L394.3 942.4 L390.0 941.8 L386.4 936.9 L323.8 917.9 Z" fill="#d2e86a"/><path d="M379.0 939.3 L388.2 942.4 L382.1 953.5 L372.9 950.4 Z" fill="#e8e048"/><path d="M262.4 886.6 L266.1 883.1 L281.5 889.3 L279.6 893.9 L267.3 891.5 L264.9 892.7 Z" fill="#d2e86a"/><path d="M246.5 896.4 L256.3 886.6 L262.4 889.0 L251.4 899.5 Z" fill="#e8e048"/><path d="M232.4 919.1 L246.5 903.8 L253.2 906.2 L239.1 922.2 Z" fill="#d2e86a"/><path d="M297.4 892.1 L306.6 894.6 L306.0 896.6 L297.0 893.9 Z" fill="#d2e86a"/><path d="M314.6 899.5 L320.1 901.1 L319.5 902.8 L314.2 901.3 Z" fill="#d2e86a"/><path d="M190.6 848.1 L198.6 850.3 L197.8 852.5 L190.2 850.1 Z" fill="#d2e86a"/><path d="M845.4 254.4 L858.5 245.6 L863.7 249.6 L852.6 257.6 ZM916.4 262.8 L968.2 273.5 L959.4 286.3 L949.8 283.9 L955.4 276.7 L916.4 269.5 Z" fill="#d2e86a"/><path d="M1144.6 400.3 L1161.1 402.3 L1183.2 412.1 L1192.5 420.0 L1191.0 424.4 L1180.7 419.0 L1161.1 414.1 L1146.4 406.7 Z" fill="#d2e86a"/><path d="M1061.1 287.0 L1059.9 312.0" stroke="#ffff00" stroke-width="1.8"/></svg><div class="t" style="left:224.5px;top:845.5px;line-height:21px;font-size:14.8px;color:#e0e0e0;letter-spacing:-0.45px;">322.60</div><svg style="position:absolute;left:0.0px;top:0.0px;" width="1578.5" height="1341.5" viewBox="0 0 1578.5 1341.5"><defs><linearGradient id="sg" gradientUnits="userSpaceOnUse" x1="986" y1="291" x2="386" y2="941"><stop offset="0" stop-color="#ea4128"/><stop offset="0.55" stop-color="#e9452a"/><stop offset="1" stop-color="#e84f2b"/></linearGradient></defs><path d="M774.2 234.5 L1184.0 343.4 L697.0 1038.2 L189.9 834.8 Z" fill="url(#sg)"/><filter id="bl" x="-5%" y="-5%" width="110%" height="110%"><feGaussianBlur stdDeviation="1.1"/></filter><path d="M801.5 371.2 L805.3 367.9 L810.3 365.2 L816.3 363.2 L822.9 362.0 L829.9 361.6 L836.8 362.2 L843.4 363.5 L849.4 365.7 L854.4 368.6 L858.1 372.0 L860.5 375.8 L861.3 379.8 L860.5 383.7 L858.2 387.5 L812.6 441.0 L808.7 444.6 L803.4 447.5 L797.2 449.7 L790.2 451.0 L782.9 451.4 L775.6 450.8 L768.8 449.3 L762.7 446.9 L757.6 443.8 L753.9 440.1 L751.7 436.1 L751.1 431.9 L752.1 427.7 L754.7 423.8 ZM928.6 366.5 L932.0 363.3 L936.7 360.7 L942.4 358.7 L948.8 357.6 L955.5 357.2 L962.3 357.8 L968.8 359.1 L974.7 361.2 L979.7 364.0 L983.6 367.3 L986.1 370.9 L987.2 374.8 L986.7 378.6 L984.7 382.3 L914.0 471.9 L910.3 475.4 L905.2 478.4 L899.2 480.6 L892.4 481.9 L885.2 482.3 L878.0 481.7 L871.1 480.1 L865.0 477.7 L859.9 474.6 L856.0 471.0 L853.6 466.9 L852.8 462.7 L853.6 458.5 L855.9 454.6 ZM1000.4 429.1 L1004.1 425.5 L1009.2 422.5 L1015.3 420.3 L1022.3 418.9 L1029.7 418.6 L1037.3 419.2 L1044.5 420.7 L1051.1 423.1 L1056.8 426.3 L1061.2 430.0 L1064.2 434.2 L1065.5 438.6 L1065.2 443.0 L1063.1 447.1 L1022.2 503.7 L1018.4 507.6 L1013.1 510.9 L1006.6 513.3 L999.3 514.7 L991.5 515.1 L983.6 514.5 L976.1 512.8 L969.3 510.1 L963.5 506.7 L959.1 502.6 L956.3 498.2 L955.2 493.5 L955.8 488.9 L958.1 484.6 ZM578.0 473.1 L583.3 468.7 L589.9 465.1 L597.7 462.5 L606.2 460.9 L614.9 460.5 L623.5 461.2 L631.6 463.0 L638.7 465.9 L644.6 469.7 L648.8 474.2 L651.2 479.2 L651.7 484.5 L650.2 489.8 L646.8 494.7 L587.5 559.7 L582.1 564.5 L575.0 568.4 L566.8 571.4 L557.9 573.1 L548.6 573.6 L539.5 572.8 L531.1 570.7 L523.8 567.5 L517.9 563.4 L513.8 558.4 L511.7 553.0 L511.5 547.4 L513.5 541.8 L517.3 536.6 ZM537.2 666.9 L542.2 662.5 L548.4 658.9 L555.6 656.2 L563.4 654.7 L571.5 654.2 L579.4 655.0 L586.8 656.8 L593.3 659.8 L598.6 663.6 L602.4 668.2 L604.5 673.2 L604.9 678.6 L603.4 683.9 L600.1 688.9 L541.6 757.5 L536.5 762.2 L529.9 766.2 L522.4 769.1 L514.1 770.9 L505.6 771.4 L497.2 770.5 L489.6 768.4 L482.9 765.2 L477.6 761.0 L473.9 756.1 L472.0 750.6 L472.0 744.9 L473.9 739.3 L477.5 734.0 ZM647.6 704.9 L652.3 700.4 L658.3 696.8 L665.3 694.1 L673.0 692.5 L681.1 692.1 L689.0 692.8 L696.5 694.7 L703.1 697.7 L708.6 701.6 L712.6 706.2 L715.0 711.3 L715.6 716.7 L714.3 722.1 L711.3 727.2 L615.8 848.2 L610.7 853.3 L604.2 857.5 L596.5 860.6 L588.2 862.4 L579.5 862.9 L571.0 862.1 L563.1 859.8 L556.2 856.4 L550.7 852.0 L546.8 846.7 L544.7 840.9 L544.5 834.9 L546.2 829.0 L549.7 823.4 ZM758.3 746.8 L763.1 741.8 L769.5 737.8 L777.0 734.8 L785.3 733.0 L794.1 732.5 L802.7 733.4 L811.0 735.5 L818.4 738.8 L824.5 743.1 L829.2 748.2 L832.1 753.9 L833.0 759.9 L832.0 765.9 L829.0 771.5 L777.1 843.3 L772.0 848.7 L765.4 853.2 L757.4 856.5 L748.6 858.5 L739.4 859.0 L730.3 858.1 L721.7 855.7 L714.1 852.1 L707.8 847.3 L703.3 841.7 L700.6 835.6 L700.0 829.2 L701.4 822.9 L704.8 817.0 ZM890.4 323.6 L887.4 326.4 L883.7 328.9 L879.2 331.1 L874.2 332.8 L868.7 334.1 L862.8 334.8 L856.8 335.1 L850.7 334.8 L844.8 334.0 L839.2 332.7 L834.0 331.0 L829.3 328.8 L825.3 326.3 L822.1 323.5 L819.7 320.4 L818.3 317.3 L817.7 314.0 L818.1 310.7 L819.4 307.6 L821.6 304.6 L824.6 301.9 L828.4 299.4 L832.8 297.3 L837.8 295.7 L843.2 294.4 L849.0 293.7 L854.8 293.5 L860.7 293.7 L866.5 294.5 L872.1 295.7 L877.2 297.4 L881.9 299.5 L885.9 301.9 L889.2 304.7 L891.6 307.7 L893.3 310.8 L893.9 314.1 L893.7 317.3 L892.5 320.5 ZM441.3 835.7 L436.7 840.2 L431.2 844.2 L424.9 847.7 L418.0 850.5 L410.7 852.5 L403.1 853.7 L395.5 854.1 L388.0 853.6 L380.8 852.3 L374.1 850.2 L368.1 847.3 L363.0 843.8 L358.8 839.7 L355.6 835.2 L353.6 830.3 L352.8 825.1 L353.1 819.9 L354.6 814.7 L357.3 809.6 L361.0 804.8 L365.6 800.4 L371.1 796.5 L377.3 793.2 L384.1 790.6 L391.3 788.7 L398.6 787.5 L406.1 787.2 L413.4 787.6 L420.4 788.9 L426.9 790.8 L432.9 793.6 L438.0 796.9 L442.3 800.9 L445.5 805.3 L447.7 810.1 L448.8 815.2 L448.6 820.4 L447.3 825.7 L444.9 830.8 ZM753.7 472.3 L860.8 505.4 L861.7 507.7 L735.5 665.4 L731.7 666.4 L617.1 626.8 L615.8 624.9 L749.5 473.3 Z" fill="#e87937" filter="url(#bl)"/><path d="M865.7 298.4 L872.1 300.2 L860.7 313.0 L882.7 319.1 L879.3 322.9 L857.3 316.9 L845.8 329.9 L839.3 328.1 L850.9 315.1 L829.1 309.0 L832.5 305.2 L854.3 311.2 Z" fill="#e2532c" stroke="#e2532c" stroke-width="3" stroke-linejoin="round"/><path d="M378.5 805.9 L432.0 826.4 L432.1 832.2 L424.2 835.3 L370.6 814.6 L370.9 808.6 Z" fill="#e2532c"/><path d="M256.8 829.4 L253.5 832.1 L249.3 834.0 L244.7 834.9 L240.0 834.9 L235.9 833.9 L232.5 831.9 L230.4 829.3 L229.7 826.2 L230.5 822.9 L232.6 819.9 L235.9 817.3 L240.1 815.4 L244.7 814.4 L249.3 814.4 L253.4 815.5 L256.7 817.4 L258.9 820.0 L259.6 823.1 L258.9 826.3 Z" fill="#e85a30"/><path d="M244.7 815.2 L248.2 815.1 L251.4 815.7 L254.3 816.9 L256.5 818.5 L257.9 820.6 L258.5 822.9 L258.1 825.4" fill="none" stroke="#1c0a05" stroke-width="2.2"/><path d="M690.9 1003.9 L687.8 1006.9 L683.7 1009.1 L678.9 1010.3 L673.8 1010.2 L669.1 1009.0 L665.1 1006.7 L662.3 1003.7 L660.9 1000.1 L661.1 996.3 L662.8 992.8 L665.8 989.8 L670.0 987.6 L674.7 986.5 L679.7 986.5 L684.4 987.7 L688.4 989.9 L691.2 993.0 L692.6 996.5 L692.5 1000.3 Z" fill="#e85a30"/><path d="M674.9 987.4 L678.7 987.3 L682.3 988.0 L685.6 989.3 L688.3 991.3 L690.3 993.7 L691.4 996.4 L691.5 999.2" fill="none" stroke="#1c0a05" stroke-width="2.2"/><path d="M800.9 257.6 L798.9 259.2 L796.0 260.3 L792.7 260.8 L789.1 260.8 L785.7 260.3 L782.9 259.1 L780.8 257.6 L779.7 255.9 L779.7 254.0 L780.8 252.2 L782.8 250.7 L785.7 249.6 L789.0 249.1 L792.5 249.1 L795.9 249.6 L798.7 250.7 L800.8 252.2 L801.9 254.0 L802.0 255.9 Z" fill="#e85a30"/><path d="M789.1 249.5 L791.8 249.5 L794.4 249.8 L796.7 250.5 L798.7 251.4 L800.2 252.6 L801.0 253.9 L801.2 255.3" fill="none" stroke="#1c0a05" stroke-width="2.2"/><path d="M1161.0 354.0 L1159.2 355.7 L1156.4 356.9 L1153.0 357.6 L1149.2 357.6 L1145.5 356.9 L1142.2 355.7 L1139.7 354.0 L1138.1 352.0 L1137.7 349.9 L1138.5 348.0 L1140.4 346.3 L1143.1 345.1 L1146.6 344.5 L1150.3 344.5 L1154.0 345.1 L1157.2 346.3 L1159.8 348.0 L1161.3 350.0 L1161.8 352.1 Z" fill="#e85a30"/><path d="M1146.8 345.0 L1149.6 344.9 L1152.4 345.3 L1155.1 346.0 L1157.4 347.1 L1159.2 348.4 L1160.4 349.9 L1160.9 351.5" fill="none" stroke="#1c0a05" stroke-width="2.2"/><path d="M840.1 362.0 L847.2 364.0M963.2 357.0 L970.4 359.0M1039.1 418.3 L1046.6 420.4M629.6 461.8 L636.7 464.0M581.8 654.3 L589.6 657.0M690.6 691.9 L698.7 694.6M805.5 732.8 L813.9 735.7M868.9 294.8 L875.7 296.7M425.0 790.1 L433.1 793.2M753.0 471.1 L803.8 487.0M814.8 490.3 L862.6 505.3" stroke="#120603" stroke-width="1.7" fill="none"/><path d="M507.0 1004.0 L519.7 1099.0" stroke="#ffff00" stroke-width="1.8"/><path d="M1446.5 132.0 L1393.5 114.0" stroke="#f03a5a" stroke-width="3.4" stroke-linecap="round"/><path d="M1446.5 132.0 L1444.1 93.0" stroke="#2f86f6" stroke-width="3.4" stroke-linecap="round"/><path d="M1446.5 132.0 L1419.5 162.0" stroke="#86c41e" stroke-width="3.4" stroke-linecap="round"/><circle cx="1483.3" cy="87.0" r="18.1" fill="#3b5a0b" stroke="#86c41e" stroke-width="3.4"/><circle cx="1512.5" cy="154.7" r="18.1" fill="#871a30" stroke="#f03a5a" stroke-width="3.4"/><circle cx="1448.7" cy="188.6" r="18.1" fill="#1c4a96" stroke="#2f86f6" stroke-width="3.4"/><circle cx="1443.9" cy="75.0" r="18.1" fill="#1c4a96" stroke="#2f86f6" stroke-width="3.4"/><circle cx="1379.5" cy="108.8" r="18.1" fill="#7b1930" stroke="#f03a5a" stroke-width="3.4"/><circle cx="1408.7" cy="175.8" r="18.1" fill="#3b5a0b" stroke="#86c41e" stroke-width="3.4"/></svg></div>
<div class="t" style="left:2542.4px;top:1239.5px;line-height:21px;font-size:14.8px;color:#e0e0e0;letter-spacing:-0.43px;">408.12</div>
<div class="t" style="left:2539.6px;top:1254.8px;line-height:21px;font-size:14.8px;color:#e0e0e0;letter-spacing:-0.37px;">304.52</div>
<div class="t" style="left:2651.3px;top:1307.0px;line-height:21px;font-size:14.8px;color:#e0e0e0;letter-spacing:-0.37px;">268.09</div>
<div class="t" style="left:2767.7px;top:1361.5px;line-height:21px;font-size:14.8px;color:#e0e0e0;letter-spacing:-0.39px;">231.66</div>
<div class="t" style="left:2890.0px;top:1419.1px;line-height:21px;font-size:14.8px;color:#e0e0e0;letter-spacing:-0.45px;">195.23</div>
<div class="t" style="left:3018.0px;top:1479.5px;line-height:21px;font-size:14.8px;color:#e0e0e0;letter-spacing:-0.45px;">158.80</div>
<div class="t" style="left:3881.0px;top:395.0px;line-height:24px;font-size:17px;color:#2a7fff;letter-spacing:0.37px;">Z(mm)</div>
<div class="t" style="left:3840.3px;top:427.3px;line-height:21px;font-size:14.8px;color:#e0e0e0;letter-spacing:-0.43px;">41.781</div>
<div class="t" style="left:3836.8px;top:454.0px;line-height:21px;font-size:14.8px;color:#e0e0e0;letter-spacing:-0.41px;">31.525</div>
<div class="t" style="left:3832.8px;top:479.9px;line-height:21px;font-size:14.8px;color:#e0e0e0;letter-spacing:-0.53px;">21.269</div>
<div class="t" style="left:3829.6px;top:504.5px;line-height:21px;font-size:14.8px;color:#e0e0e0;letter-spacing:-0.45px;">11.012</div>
<div class="t" style="left:3823.6px;top:530.5px;line-height:21px;font-size:14.8px;color:#e0e0e0;letter-spacing:-0.28px;">0.756</div>
<div class="t" style="left:3820.8px;top:556.2px;line-height:21px;font-size:14.8px;color:#e0e0e0;letter-spacing:-0.25px;">-9.500</div>
<div class="t" style="left:3558.4px;width:800px;text-align:center;top:247.0px;line-height:35px;font-size:25px;color:#fff;font-weight:700;">Z</div>
<div class="t" style="left:3494.0px;width:800px;text-align:center;top:280.8px;line-height:35px;font-size:25px;color:#fff;font-weight:700;">X</div>
<div class="t" style="left:3523.2px;width:800px;text-align:center;top:347.8px;line-height:35px;font-size:25px;color:#fff;font-weight:700;">Y</div>
<svg style="position:absolute;left:4027.0px;top:455.5px;" width="30.0" height="34.0" viewBox="0 0 30 34"><path d="M9.5 17 V6.2 a2 2 0 0 1 4 0 V14 M13.5 13.5 V3.6 a2 2 0 0 1 4 0 V14 M17.5 13.5 V5 a2 2 0 0 1 4 0 V15 M21.5 15 V9 a2 2 0 0 1 4 0 V21 C25.5 28 22 31.5 16.5 31.5 C12 31.5 9.5 29.5 7 25.5 L2.6 18.8 a2.1 2.1 0 0 1 3.4 -2.4 L9.5 20.5 Z" fill="none" stroke="#fff" stroke-width="2" stroke-linejoin="round"/></svg>
<svg style="position:absolute;left:4025.0px;top:524.0px;" width="38.0" height="38.0" viewBox="0 0 38 38"><circle cx="14.5" cy="14.5" r="12" fill="none" stroke="#fff" stroke-width="2.6"/><path d="M23.5 23.5 L35 35" stroke="#fff" stroke-width="3"/><path d="M14.5 8 V21 M8 14.5 H21" stroke="#fff" stroke-width="2.6"/></svg>
<div style="left:4011.0px;top:582.6px;width:64.0px;height:4.2px;background:#a8a8a8;"></div>
<div style="left:4012.0px;top:1449.6px;width:62.0px;height:62.0px;background:#222;border-radius:50%;border:3px solid #6c6c6c;"></div>
<div class="t" style="left:3643.0px;width:800px;text-align:center;top:1454.0px;line-height:49px;font-size:35px;color:#f4c644;font-weight:700;">?</div>
<!-- p5_results -->
<div style="left:2301.0px;top:1534.5px;width:1792.0px;height:511.5px;background:#1b1b1b;"></div>
<div class="t" style="left:2313.0px;top:1538.5px;line-height:34px;font-size:24px;color:#fff;letter-spacing:1.00px;">측정 결과</div>
<svg style="position:absolute;left:4064.5px;top:1548.5px;" width="17.0" height="10.5" viewBox="0 0 17 10.5"><path d="M1.5 1.5 L9 9.5 L16.5 1.5" fill="none" stroke="#9a9a9a" stroke-width="2.2"/></svg>
<div style="left:2301.0px;top:1578.0px;width:1792.0px;height:58.5px;background:#252525;"></div>
<div style="left:2301.0px;top:1639.3px;width:1792.0px;height:57.7px;background:#252525;"></div>
<div style="left:2301.0px;top:1699.0px;width:1792.0px;height:57.8px;background:#252525;"></div>
<div style="left:2301.0px;top:1759.0px;width:1792.0px;height:58.0px;background:#252525;"></div>
<div style="left:2301.0px;top:1819.0px;width:1792.0px;height:57.8px;background:#252525;"></div>
<div style="left:2301.0px;top:1879.0px;width:1792.0px;height:57.8px;background:#252525;"></div>
<div style="left:2301.0px;top:1939.0px;width:1792.0px;height:57.5px;background:#252525;"></div>
<div class="t" style="left:2423.6px;top:1591.5px;line-height:34px;font-size:24px;color:#e8e8e8;letter-spacing:-0.25px;">Cloud</div>
<div style="left:2491.0px;top:1596.0px;width:1.5px;height:25.0px;background:#5a5a5a;"></div>
<svg style="position:absolute;left:2501.0px;top:1597.5px;" width="24.0" height="22.0" viewBox="0 0 24 22"><defs><clipPath id="hc25011597"><rect x="0" y="0" width="24" height="22"/></clipPath></defs><g clip-path="url(#hc25011597)"><path d="M-22.0 22 L0.0 0" stroke="#f0f0f0" stroke-width="1.7"/><path d="M-17.6 22 L4.4 0" stroke="#f0f0f0" stroke-width="1.7"/><path d="M-13.2 22 L8.8 0" stroke="#f0f0f0" stroke-width="1.7"/><path d="M-8.8 22 L13.2 0" stroke="#f0f0f0" stroke-width="1.7"/><path d="M-4.4 22 L17.6 0" stroke="#f0f0f0" stroke-width="1.7"/><path d="M0.0 22 L22.0 0" stroke="#f0f0f0" stroke-width="1.7"/><path d="M4.4 22 L26.4 0" stroke="#f0f0f0" stroke-width="1.7"/><path d="M8.8 22 L30.8 0" stroke="#f0f0f0" stroke-width="1.7"/><path d="M13.2 22 L35.2 0" stroke="#f0f0f0" stroke-width="1.7"/><path d="M17.6 22 L39.6 0" stroke="#f0f0f0" stroke-width="1.7"/><path d="M22.0 22 L44.0 0" stroke="#f0f0f0" stroke-width="1.7"/><path d="M26.4 22 L48.4 0" stroke="#f0f0f0" stroke-width="1.7"/></g><rect x="0.9" y="0.9" width="22.2" height="20.2" fill="none" stroke="#f0f0f0" stroke-width="1.8"/></svg>
<svg style="position:absolute;left:4047.5px;top:1600.0px;" width="23.0" height="15.0" viewBox="0 0 23 15"><path d="M1 7.5 C5.5 -0.8 17.5 -0.8 22 7.5 C17.5 15.8 5.5 15.8 1 7.5 Z" fill="none" stroke="#fff" stroke-width="1.9"/><circle cx="11.5" cy="7.5" r="3.5" fill="#fff"/></svg>
<div style="left:2329.0px;top:1651.0px;width:64.0px;height:31.8px;background:#50c88c;border-radius:4px;"></div>
<div class="t" style="left:1961.0px;width:800px;text-align:center;top:1658.5px;line-height:18px;font-size:12.5px;color:#fff;">OK</div>
<div class="t" style="left:2423.6px;top:1651.5px;line-height:34px;font-size:24px;color:#e8e8e8;letter-spacing:-0.60px;">Measure Dimensions by Features_1</div>
<div style="left:2795.0px;top:1656.0px;width:1.5px;height:25.0px;background:#5a5a5a;"></div>
<svg style="position:absolute;left:2804.5px;top:1658.0px;" width="25.0" height="22.0" viewBox="0 0 25 22"><rect x="1" y="1" width="23" height="9.5" fill="none" stroke="#fff" stroke-width="1.9"/><path d="M6.8 5 V10 M12.5 5 V10 M18.2 5 V10" stroke="#fff" stroke-width="1.7"/><path d="M1 17 H24 M5 13.5 L1 17 L5 20.5 M20 13.5 L24 17 L20 20.5" fill="none" stroke="#fff" stroke-width="1.7"/></svg>
<div class="t" style="left:2834.0px;top:1651.5px;line-height:34px;font-size:24px;color:#e8e8e8;letter-spacing:0.94px;">높이(출력)</div>
<div class="t" style="left:3665.4px;top:1652.5px;line-height:32px;font-size:23px;color:#4fc484;letter-spacing:0.16px;">-35.633 mm</div>
<div class="t" style="left:3791.5px;top:1652.5px;line-height:32px;font-size:23px;color:#c4c4c4;letter-spacing:0.20px;">(-35.633 mm)</div>
<svg style="position:absolute;left:3971.5px;top:1653.5px;" width="21.0" height="28.0" viewBox="0 0 21 28"><path d="M5 1.2 H16 M6.8 1.2 V10.5 L2.2 18 H18.8 L14.2 10.5 V1.2" fill="#1f7fe6" stroke="#1f7fe6" stroke-width="2" stroke-linejoin="round"/><path d="M10.5 18 V27" stroke="#1f7fe6" stroke-width="1.8"/></svg>
<div style="left:4029.5px;top:1656.0px;width:1.5px;height:25.0px;background:#5a5a5a;"></div>
<svg style="position:absolute;left:4047.5px;top:1660.0px;" width="23.0" height="15.0" viewBox="0 0 23 15"><path d="M1 7.5 C5.5 -0.8 17.5 -0.8 22 7.5 C17.5 15.8 5.5 15.8 1 7.5 Z" fill="none" stroke="#fff" stroke-width="1.9"/><circle cx="11.5" cy="7.5" r="3.5" fill="#fff"/></svg>
<div style="left:2329.0px;top:1711.0px;width:64.0px;height:31.8px;background:#50c88c;border-radius:4px;"></div>
<div class="t" style="left:1961.0px;width:800px;text-align:center;top:1718.5px;line-height:18px;font-size:12.5px;color:#fff;">OK</div>
<div class="t" style="left:2423.6px;top:1711.5px;line-height:34px;font-size:24px;color:#e8e8e8;letter-spacing:-0.60px;">Measure Dimensions by Features_2</div>
<div style="left:2795.0px;top:1716.0px;width:1.5px;height:25.0px;background:#5a5a5a;"></div>
<svg style="position:absolute;left:2804.5px;top:1718.0px;" width="25.0" height="22.0" viewBox="0 0 25 22"><rect x="1" y="1" width="23" height="9.5" fill="none" stroke="#fff" stroke-width="1.9"/><path d="M6.8 5 V10 M12.5 5 V10 M18.2 5 V10" stroke="#fff" stroke-width="1.7"/><path d="M1 17 H24 M5 13.5 L1 17 L5 20.5 M20 13.5 L24 17 L20 20.5" fill="none" stroke="#fff" stroke-width="1.7"/></svg>
<div class="t" style="left:2834.0px;top:1711.5px;line-height:34px;font-size:24px;color:#e8e8e8;letter-spacing:0.94px;">높이(출력)</div>
<div class="t" style="left:3665.4px;top:1712.5px;line-height:32px;font-size:23px;color:#4fc484;letter-spacing:0.16px;">-35.779 mm</div>
<div class="t" style="left:3791.5px;top:1712.5px;line-height:32px;font-size:23px;color:#c4c4c4;letter-spacing:0.20px;">(-35.779 mm)</div>
<svg style="position:absolute;left:3971.5px;top:1713.5px;" width="21.0" height="28.0" viewBox="0 0 21 28"><path d="M5 1.2 H16 M6.8 1.2 V10.5 L2.2 18 H18.8 L14.2 10.5 V1.2" fill="#1f7fe6" stroke="#1f7fe6" stroke-width="2" stroke-linejoin="round"/><path d="M10.5 18 V27" stroke="#1f7fe6" stroke-width="1.8"/></svg>
<div style="left:4029.5px;top:1716.0px;width:1.5px;height:25.0px;background:#5a5a5a;"></div>
<svg style="position:absolute;left:4047.5px;top:1720.0px;" width="23.0" height="15.0" viewBox="0 0 23 15"><path d="M1 7.5 C5.5 -0.8 17.5 -0.8 22 7.5 C17.5 15.8 5.5 15.8 1 7.5 Z" fill="none" stroke="#fff" stroke-width="1.9"/><circle cx="11.5" cy="7.5" r="3.5" fill="#fff"/></svg>
<div class="t" style="left:2423.6px;top:1773.0px;line-height:31px;font-size:22.5px;color:#e8e8e8;letter-spacing:0.60px;">3D线激光轮廓测量仪_1</div>
<div style="left:2668.8px;top:1776.0px;width:1.5px;height:25.0px;background:#5a5a5a;"></div>
<svg style="position:absolute;left:2679.0px;top:1777.5px;" width="24.0" height="22.0" viewBox="0 0 24 22"><defs><clipPath id="hc26791777"><rect x="0" y="0" width="24" height="22"/></clipPath></defs><g clip-path="url(#hc26791777)"><path d="M-22.0 22 L0.0 0" stroke="#f0f0f0" stroke-width="1.7"/><path d="M-17.6 22 L4.4 0" stroke="#f0f0f0" stroke-width="1.7"/><path d="M-13.2 22 L8.8 0" stroke="#f0f0f0" stroke-width="1.7"/><path d="M-8.8 22 L13.2 0" stroke="#f0f0f0" stroke-width="1.7"/><path d="M-4.4 22 L17.6 0" stroke="#f0f0f0" stroke-width="1.7"/><path d="M0.0 22 L22.0 0" stroke="#f0f0f0" stroke-width="1.7"/><path d="M4.4 22 L26.4 0" stroke="#f0f0f0" stroke-width="1.7"/><path d="M8.8 22 L30.8 0" stroke="#f0f0f0" stroke-width="1.7"/><path d="M13.2 22 L35.2 0" stroke="#f0f0f0" stroke-width="1.7"/><path d="M17.6 22 L39.6 0" stroke="#f0f0f0" stroke-width="1.7"/><path d="M22.0 22 L44.0 0" stroke="#f0f0f0" stroke-width="1.7"/><path d="M26.4 22 L48.4 0" stroke="#f0f0f0" stroke-width="1.7"/></g><rect x="0.9" y="0.9" width="22.2" height="20.2" fill="none" stroke="#f0f0f0" stroke-width="1.8"/></svg>
<div class="t" style="left:2707.8px;top:1771.5px;line-height:34px;font-size:24px;color:#e8e8e8;letter-spacing:1.26px;">포인트 클라우드(출력)</div>
<svg style="position:absolute;left:4048.5px;top:1774.0px;" width="21.0" height="28.0" viewBox="0 0 21 28"><path d="M5 1.2 H16 M6.8 1.2 V10.5 L2.2 18 H18.8 L14.2 10.5 V1.2" fill="none" stroke="#a8a8a8" stroke-width="2" stroke-linejoin="round"/><path d="M10.5 18 V27" stroke="#a8a8a8" stroke-width="1.8"/></svg>
<div class="t" style="left:2423.6px;top:1833.0px;line-height:31px;font-size:22.5px;color:#e8e8e8;letter-spacing:0.60px;">3D线激光轮廓测量仪_1</div>
<div style="left:2668.8px;top:1836.0px;width:1.5px;height:25.0px;background:#5a5a5a;"></div>
<svg style="position:absolute;left:2679.0px;top:1837.5px;" width="24.0" height="22.0" viewBox="0 0 24 22"><defs><clipPath id="hc26791837"><rect x="0" y="0" width="24" height="22"/></clipPath></defs><g clip-path="url(#hc26791837)"><path d="M-22.0 22 L0.0 0" stroke="#f0f0f0" stroke-width="1.7"/><path d="M-17.6 22 L4.4 0" stroke="#f0f0f0" stroke-width="1.7"/><path d="M-13.2 22 L8.8 0" stroke="#f0f0f0" stroke-width="1.7"/><path d="M-8.8 22 L13.2 0" stroke="#f0f0f0" stroke-width="1.7"/><path d="M-4.4 22 L17.6 0" stroke="#f0f0f0" stroke-width="1.7"/><path d="M0.0 22 L22.0 0" stroke="#f0f0f0" stroke-width="1.7"/><path d="M4.4 22 L26.4 0" stroke="#f0f0f0" stroke-width="1.7"/><path d="M8.8 22 L30.8 0" stroke="#f0f0f0" stroke-width="1.7"/><path d="M13.2 22 L35.2 0" stroke="#f0f0f0" stroke-width="1.7"/><path d="M17.6 22 L39.6 0" stroke="#f0f0f0" stroke-width="1.7"/><path d="M22.0 22 L44.0 0" stroke="#f0f0f0" stroke-width="1.7"/><path d="M26.4 22 L48.4 0" stroke="#f0f0f0" stroke-width="1.7"/></g><rect x="0.9" y="0.9" width="22.2" height="20.2" fill="none" stroke="#f0f0f0" stroke-width="1.8"/></svg>
<div class="t" style="left:2707.8px;top:1831.5px;line-height:34px;font-size:24px;color:#e8e8e8;letter-spacing:0.88px;">뎁스 맵(출력)</div>
<svg style="position:absolute;left:4048.5px;top:1834.0px;" width="21.0" height="28.0" viewBox="0 0 21 28"><path d="M5 1.2 H16 M6.8 1.2 V10.5 L2.2 18 H18.8 L14.2 10.5 V1.2" fill="none" stroke="#a8a8a8" stroke-width="2" stroke-linejoin="round"/><path d="M10.5 18 V27" stroke="#a8a8a8" stroke-width="1.8"/></svg>
<div class="t" style="left:2423.6px;top:1893.0px;line-height:31px;font-size:22.5px;color:#e8e8e8;letter-spacing:0.60px;">3D线激光轮廓测量仪_1</div>
<div style="left:2668.8px;top:1896.0px;width:1.5px;height:25.0px;background:#5a5a5a;"></div>
<svg style="position:absolute;left:2679.0px;top:1897.5px;" width="24.0" height="22.0" viewBox="0 0 24 22"><defs><clipPath id="hc26791897"><rect x="0" y="0" width="24" height="22"/></clipPath></defs><g clip-path="url(#hc26791897)"><path d="M-22.0 22 L0.0 0" stroke="#f0f0f0" stroke-width="1.7"/><path d="M-17.6 22 L4.4 0" stroke="#f0f0f0" stroke-width="1.7"/><path d="M-13.2 22 L8.8 0" stroke="#f0f0f0" stroke-width="1.7"/><path d="M-8.8 22 L13.2 0" stroke="#f0f0f0" stroke-width="1.7"/><path d="M-4.4 22 L17.6 0" stroke="#f0f0f0" stroke-width="1.7"/><path d="M0.0 22 L22.0 0" stroke="#f0f0f0" stroke-width="1.7"/><path d="M4.4 22 L26.4 0" stroke="#f0f0f0" stroke-width="1.7"/><path d="M8.8 22 L30.8 0" stroke="#f0f0f0" stroke-width="1.7"/><path d="M13.2 22 L35.2 0" stroke="#f0f0f0" stroke-width="1.7"/><path d="M17.6 22 L39.6 0" stroke="#f0f0f0" stroke-width="1.7"/><path d="M22.0 22 L44.0 0" stroke="#f0f0f0" stroke-width="1.7"/><path d="M26.4 22 L48.4 0" stroke="#f0f0f0" stroke-width="1.7"/></g><rect x="0.9" y="0.9" width="22.2" height="20.2" fill="none" stroke="#f0f0f0" stroke-width="1.8"/></svg>
<div class="t" style="left:2707.8px;top:1891.5px;line-height:34px;font-size:24px;color:#e8e8e8;letter-spacing:1.43px;">그레이스케일(출력)</div>
<svg style="position:absolute;left:4048.5px;top:1894.0px;" width="21.0" height="28.0" viewBox="0 0 21 28"><path d="M5 1.2 H16 M6.8 1.2 V10.5 L2.2 18 H18.8 L14.2 10.5 V1.2" fill="none" stroke="#a8a8a8" stroke-width="2" stroke-linejoin="round"/><path d="M10.5 18 V27" stroke="#a8a8a8" stroke-width="1.8"/></svg>
<div class="t" style="left:2423.6px;top:1953.0px;line-height:31px;font-size:22.5px;color:#e8e8e8;letter-spacing:0.60px;">3D线激光轮廓测量仪_1</div>
<div style="left:2668.8px;top:1956.0px;width:1.5px;height:25.0px;background:#5a5a5a;"></div>
<div class="t" style="left:2676.0px;top:1951.5px;line-height:34px;font-size:24px;color:#e8e8e8;letter-spacing:1.13px;">스케이링 비율(출력)</div>
<svg style="position:absolute;left:4048.5px;top:1954.0px;" width="21.0" height="28.0" viewBox="0 0 21 28"><path d="M5 1.2 H16 M6.8 1.2 V10.5 L2.2 18 H18.8 L14.2 10.5 V1.2" fill="none" stroke="#a8a8a8" stroke-width="2" stroke-linejoin="round"/><path d="M10.5 18 V27" stroke="#a8a8a8" stroke-width="1.8"/></svg>
<div class="t" style="left:2716.0px;top:1930.7px;line-height:85px;font-size:61px;color:#fff;letter-spacing:1.89px;">Copyright © Mech-Mind. All Rights Reserved.</div>
</body></html>
